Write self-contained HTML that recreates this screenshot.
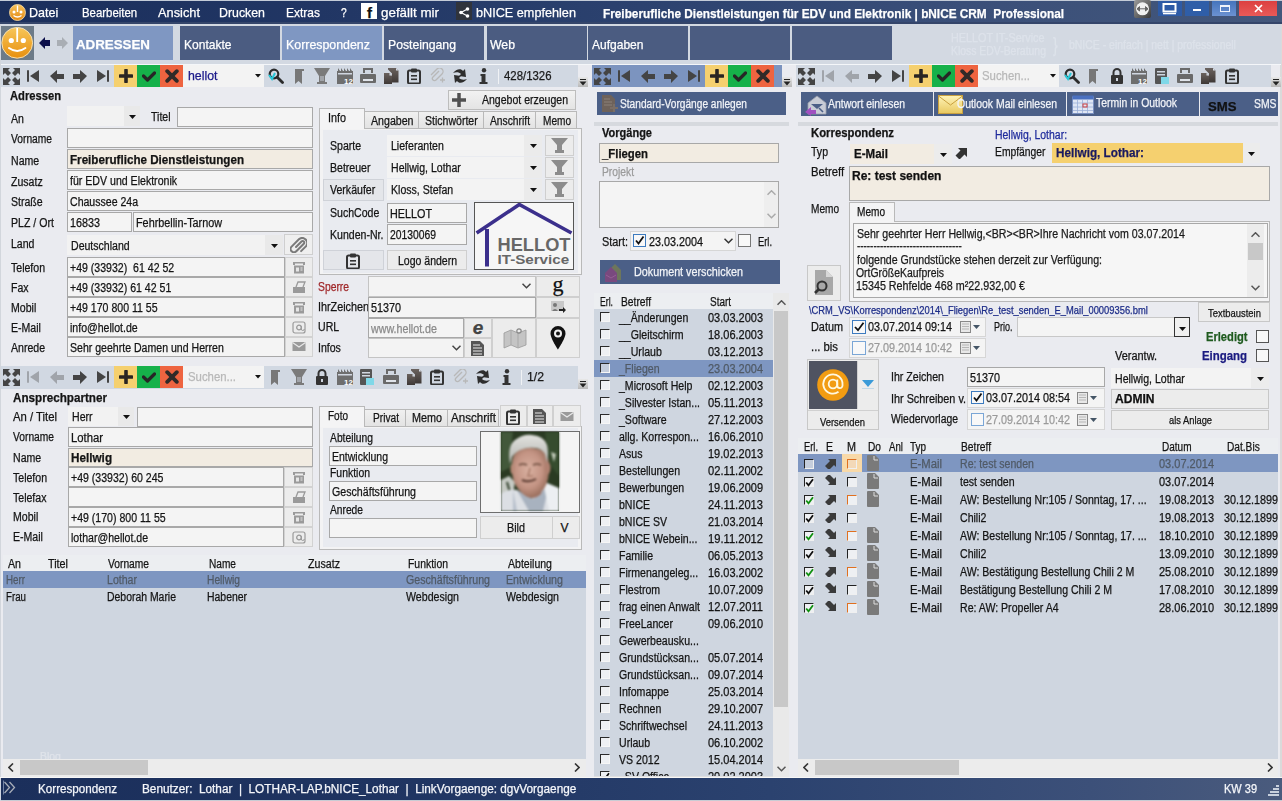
<!DOCTYPE html>
<html><head><meta charset="utf-8"><style>
html,body{margin:0;padding:0;}
body{width:1282px;height:801px;overflow:hidden;position:relative;background:#eaebf0;font-family:"Liberation Sans",sans-serif;}
body>div,body>svg{position:absolute;white-space:pre;transform-origin:0 0;-webkit-text-stroke:0.25px currentColor;}
</style></head><body>
<div style="left:0px;top:0px;width:1282px;height:801px;background:#eaebf0;"></div>
<div style="left:0px;top:24px;width:1px;height:760px;background:#d2d6dc;"></div>
<div style="left:1280px;top:24px;width:2px;height:760px;background:#dadada;"></div>
<div style="left:0px;top:0px;width:1282px;height:24px;background:linear-gradient(90deg,#1b2f5c 0%,#213664 25%,#2c426f 50%,#3a4f79 75%,#43577b 100%);"></div>
<div style="left:0px;top:0px;width:1282px;height:1px;background:#c4ccd8;"></div>
<svg style="left:9px;top:4px;" width="17" height="17" viewBox="0 0 17 17"><defs><linearGradient id="sg" x1="0" y1="0" x2="0" y2="1"><stop offset="0" stop-color="#f6c15a"/><stop offset="1" stop-color="#e48a14"/></linearGradient></defs><circle cx="8.5" cy="8.5" r="8" fill="url(#sg)" stroke="#fbe0a8" stroke-width=".8"/><path d="M8.5 1.5v6.5" stroke="#fff" stroke-width="1.4"/><circle cx="5" cy="8" r="1.5" fill="#fff"/><circle cx="12" cy="8" r="1.5" fill="#fff"/><path d="M4.5 11.5q4 3 8 0" stroke="#fff" stroke-width="1.3" fill="none"/></svg>
<div style="left:28.5px;top:3.0px;line-height:19px;font-size:13px;color:#ffffff;transform:scaleX(0.962);">Datei</div>
<div style="left:82.4px;top:3.0px;line-height:19px;font-size:13px;color:#ffffff;transform:scaleX(0.877);">Bearbeiten</div>
<div style="left:157.5px;top:3.0px;line-height:19px;font-size:13px;color:#ffffff;transform:scaleX(0.985);">Ansicht</div>
<div style="left:218.7px;top:3.0px;line-height:19px;font-size:13px;color:#ffffff;transform:scaleX(0.950);">Drucken</div>
<div style="left:285.7px;top:3.0px;line-height:19px;font-size:13px;color:#ffffff;transform:scaleX(0.923);">Extras</div>
<div style="left:341.0px;top:4.0px;line-height:18px;font-size:12px;color:#ffffff;transform:scaleX(0.850);">?</div>
<div style="left:361px;top:3px;width:16px;height:16px;background:#fff;"></div>
<div style="left:367.0px;top:2.0px;line-height:21px;font-size:15px;color:#111;font-weight:bold;transform:scaleX(1.000);">f</div>
<div style="left:381.0px;top:3.0px;line-height:19px;font-size:13px;color:#ffffff;transform:scaleX(1.029);">gefällt mir</div>
<div style="left:456px;top:2px;width:16px;height:18px;background:#30343c;"></div>
<svg style="left:459px;top:7px;" width="11" height="11" viewBox="0 0 11 11"><circle cx="8.5" cy="2" r="1.8" fill="#fff"/><circle cx="2" cy="5.5" r="1.8" fill="#fff"/><circle cx="8.5" cy="9" r="1.8" fill="#fff"/><path d="M8.5 2L2 5.5 8.5 9" stroke="#fff" stroke-width="1.2" fill="none"/></svg>
<div style="left:476.0px;top:3.0px;line-height:19px;font-size:13px;color:#ffffff;transform:scaleX(0.974);">bNICE empfehlen</div>
<div style="left:602.5px;top:3.5px;line-height:19px;font-size:13px;color:#ffffff;font-weight:bold;transform:scaleX(0.908);">Freiberufliche Dienstleistungen für EDV und Elektronik | bNICE CRM  Professional</div>
<svg style="left:1134px;top:0px;" width="17" height="19" viewBox="0 0 17 19"><defs><linearGradient id="tvg" x1="0" y1="0" x2="1" y2="1"><stop offset="0" stop-color="#9a9a9a"/><stop offset="1" stop-color="#3a3a3a"/></linearGradient></defs><rect x="0" y="0" width="17" height="18" rx="2" fill="url(#tvg)"/><circle cx="8.5" cy="8.8" r="6.5" fill="#f0f0f0"/><path d="M3.5 8.8h10M3 8.8l2.5-2.2v4.4zM14 8.8l-2.5-2.2v4.4z" stroke="#666" stroke-width="1" fill="#666"/></svg>
<div style="left:1158px;top:1px;width:24px;height:15px;background:#2d5aa6;"></div>
<svg style="left:1162px;top:3px;" width="16" height="12" viewBox="0 0 16 12"><rect x="1.5" y="1" width="12" height="7.5" fill="none" stroke="#fff" stroke-width="2"/><rect x="1" y="10" width="13" height="1.3" fill="#fff"/></svg>
<div style="left:1185px;top:1px;width:24px;height:15px;background:#2f5ea8;"></div>
<div style="left:1193px;top:9px;width:8px;height:2px;background:#fff;"></div>
<div style="left:1212px;top:1px;width:24px;height:15px;background:linear-gradient(#4474bc,#6c92d2);"></div>
<div style="left:1220px;top:4.5px;width:9.5px;height:7.5px;box-sizing:border-box;border:1.5px solid #eef3fb;border-top-width:2px;"></div>
<div style="left:1239px;top:1px;width:38px;height:15px;background:linear-gradient(#dc4040,#e85a58);"></div>
<svg style="left:1254px;top:4px;" width="9" height="9" viewBox="0 0 9 9"><path d="M1 1l7 7M8 1l-7 7" stroke="#fff" stroke-width="1.7"/></svg>
<div style="left:0px;top:22px;width:1282px;height:2px;background:#34456a;"></div>
<div style="left:1px;top:24px;width:1280px;height:40px;background:#d3d9e2;"></div>
<div style="left:1px;top:26px;width:33px;height:34px;background:#6d7b88;"></div>
<svg style="left:1px;top:26px;" width="33" height="34" viewBox="0 0 33 34"><defs><linearGradient id="bg2" x1="0" y1="0" x2="0" y2="1"><stop offset="0" stop-color="#f7c659"/><stop offset="1" stop-color="#e8900f"/></linearGradient></defs><circle cx="16.2" cy="16.8" r="15.4" fill="url(#bg2)" stroke="#fde6b8" stroke-width=".9"/><path d="M16.2 2v14" stroke="#fff" stroke-width="1.8"/><circle cx="10.3" cy="14.5" r="2.6" fill="#fff"/><circle cx="22.3" cy="14.5" r="2.6" fill="#fff"/><path d="M8 22q8.2 6 16.4 0" stroke="#fff" stroke-width="2" fill="none" stroke-linecap="round"/></svg>
<svg style="left:39px;top:37px;" width="12" height="12" viewBox="0 0 12 12"><path d="M0 6l6-6v3h5v6h-5v3z" fill="#0c0f4a"/></svg>
<svg style="left:56px;top:37px;" width="12" height="12" viewBox="0 0 12 12"><path d="M12 6l-6-6v3h-5v6h5v3z" fill="#a9aeb4"/></svg>
<div style="left:73px;top:26px;width:100px;height:34px;background:#7f97c2;"></div>
<div style="left:76.0px;top:35.0px;line-height:19px;font-size:13px;color:#fff;font-weight:bold;transform:scaleX(1.024);">ADRESSEN</div>
<div style="left:180px;top:26px;width:100px;height:34px;background:#4b5c81;"></div>
<div style="left:183.5px;top:35.0px;line-height:19px;font-size:13px;color:#fff;transform:scaleX(0.925);">Kontakte</div>
<div style="left:282px;top:26px;width:100px;height:34px;background:#7f97c2;"></div>
<div style="left:285.5px;top:35.0px;line-height:19px;font-size:13px;color:#fff;transform:scaleX(0.952);">Korrespondenz</div>
<div style="left:384px;top:26px;width:100px;height:34px;background:#4b5c81;"></div>
<div style="left:387.5px;top:35.0px;line-height:19px;font-size:13px;color:#fff;transform:scaleX(0.940);">Posteingang</div>
<div style="left:486.5px;top:26px;width:100px;height:34px;background:#4b5c81;"></div>
<div style="left:490.0px;top:35.0px;line-height:19px;font-size:13px;color:#fff;transform:scaleX(0.943);">Web</div>
<div style="left:588px;top:26px;width:100px;height:34px;background:#4b5c81;"></div>
<div style="left:591.5px;top:35.0px;line-height:19px;font-size:13px;color:#fff;transform:scaleX(0.925);">Aufgaben</div>
<div style="left:690px;top:26px;width:100px;height:34px;background:#4b5c81;"></div>
<div style="left:792px;top:26px;width:100px;height:34px;background:#4b5c81;"></div>
<div style="left:951.0px;top:28.0px;line-height:19px;font-size:13px;color:#dde2ea;transform:scaleX(0.831);">HELLOT IT-Service</div>
<div style="left:951.0px;top:40.5px;line-height:19px;font-size:13px;color:#dde2ea;transform:scaleX(0.801);">Kloss EDV-Beratung</div>
<div style="left:1052.5px;top:31.5px;line-height:26px;font-size:20px;color:#dde2ea;transform:scaleX(0.700);">}</div>
<div style="left:1069.0px;top:35.2px;line-height:19px;font-size:13px;color:#dde2ea;transform:scaleX(0.804);">bNICE - einfach | nett | professionell</div>
<div style="left:1px;top:64px;width:1280px;height:1px;background:#f4f6f9;"></div>
<div style="left:1px;top:65px;width:577px;height:22px;background:#d1d8e2;"></div>
<svg style="left:3px;top:68px;" width="17" height="17" viewBox="0 0 17 17"><g fill="#444"><path d="M0 0h7l-2 2 3 3-3 3-3-3-2 2z"/><path d="M17 0v7l-2-2-3 3-3-3 3-3-2-2z"/><path d="M0 17v-7l2 2 3-3 3 3-3 3 2 2z"/><path d="M17 17h-7l2-2-3-3 3-3 3 3 2-2z"/></g></svg>
<svg style="left:27px;top:70px;" width="13" height="13" viewBox="0 0 13 13"><g fill="#444"><rect x="0" y="0" width="2" height="12" rx="1"/><path d="M12 0v12l-9-6z"/></g></svg>
<svg style="left:50px;top:70px;" width="14" height="13" viewBox="0 0 14 13"><path fill="#444" d="M0 6l7-6v4h7v5h-7v4z"/></svg>
<svg style="left:73px;top:70px;" width="14" height="13" viewBox="0 0 14 13"><path fill="#444" d="M14 6l-7-6v4h-7v5h7v4z"/></svg>
<svg style="left:97px;top:70px;" width="13" height="13" viewBox="0 0 13 13"><g fill="#444"><rect x="10" y="0" width="2" height="12" rx="1"/><path d="M0 0v12l9-6z"/></g></svg>
<div style="left:114px;top:65px;width:23px;height:22px;background:#f5d06f;"></div>
<div style="left:137px;top:65px;width:23px;height:22px;background:#16b14a;"></div>
<div style="left:160px;top:65px;width:23px;height:22px;background:#ee6440;"></div>
<svg style="left:119px;top:69px;" width="14" height="14" viewBox="0 0 14 14"><path d="M7 1.2v11.6M1.2 7h11.6" stroke="#2a2522" stroke-width="3.6" stroke-linecap="round"/></svg>
<svg style="left:142px;top:70px;" width="14" height="12" viewBox="0 0 14 12"><path d="M1.5 6l4 4 7-7" stroke="#262626" stroke-width="3.2" fill="none" stroke-linecap="round" stroke-linejoin="round"/></svg>
<svg style="left:165px;top:69px;" width="14" height="14" viewBox="0 0 14 14"><path d="M2.2 2.2l9.6 9.6M11.8 2.2l-9.6 9.6" stroke="#302a28" stroke-width="3.8" stroke-linecap="round"/></svg>
<div style="left:183px;top:65px;width:81px;height:22px;background:#f3f3f3;"></div>
<div style="left:187.5px;top:67.0px;line-height:18px;font-size:12px;color:#1c1a8a;transform:scaleX(1.028);">hellot</div>
<svg style="left:255px;top:74px;" width="6" height="4" viewBox="0 0 6 4"><path d="M0 0h6l-3 3.5z" fill="#111"/></svg>
<svg style="left:268px;top:68px;" width="16" height="16" viewBox="0 0 16 16"><circle cx="6" cy="6" r="4.3" stroke="#2b2b2b" stroke-width="2.2" fill="none"/><path d="M9 9l5.5 5.5" stroke="#2b2b2b" stroke-width="2.8" stroke-linecap="round"/><path d="M1 7l3 4 3-6" stroke="#28c8d8" stroke-width="2" fill="none"/></svg>
<svg style="left:295px;top:68px;" width="10" height="16" viewBox="0 0 10 16"><path fill="#777" d="M0 1h9v2h-2v13l-3.5-3-3.5 3z"/></svg>
<svg style="left:314px;top:68px;" width="16" height="16" viewBox="0 0 16 16"><path fill="#7a7a7a" d="M0 0h16l-5 8v6h2v2h-10v-2h2v-6z"/><path fill="#c8ced8" d="M6 8h4v5h-4z" opacity=".5"/></svg>
<svg style="left:337px;top:68px;" width="16" height="16" viewBox="0 0 16 16"><path fill="#6e6e6e" d="M0 3h16v13h-16z"/><path fill="#6e6e6e" d="M1 0l2 3h-2zM4 0l2 3h-2zM7 0l2 3h-2zM10 0l2 3h-2zM13 0l2 3h-2z"/><rect x="1" y="5" width="14" height="1.5" fill="#d0d6e0"/><text x="7" y="15.5" font-size="8" font-weight="bold" fill="#fff" font-family="Liberation Sans">12</text></svg>
<svg style="left:360px;top:68px;" width="16" height="16" viewBox="0 0 16 16"><path fill="#6a6a6a" d="M3 0h10v5h-2v-3h-6v3h-2z"/><rect x="0" y="6" width="16" height="9" rx="1" fill="#6a6a6a"/><rect x="3" y="11" width="10" height="2" fill="#e0e4ea"/></svg>
<svg style="left:384px;top:68px;" width="15" height="16" viewBox="0 0 15 16"><defs><linearGradient id="cpg" x1="0" y1="0" x2="0" y2="1"><stop offset="0" stop-color="#6a625e"/><stop offset="1" stop-color="#3e3836"/></linearGradient></defs><path fill="url(#cpg)" d="M4 0h8l2.5 2.5v12h-6.5v-9l-4-4z"/><path fill="#d8dde6" d="M12 0v2.5h2.5z"/><path fill="url(#cpg)" d="M0 5h5.5l2.5 2.5v8.5h-8z"/><path fill="#d8dde6" d="M5.5 5v2.5h2.5z"/></svg>
<svg style="left:407px;top:68px;" width="14" height="16" viewBox="0 0 14 16"><rect x="1" y="2.5" width="12" height="13" rx="1.5" fill="none" stroke="#333" stroke-width="2"/><rect x="4" y="0.5" width="6" height="4" rx="1" fill="#333"/><rect x="4" y="7" width="6" height="1.6" fill="#333"/><rect x="4" y="10.5" width="6" height="1.6" fill="#333"/></svg>
<svg style="left:430px;top:68px;" width="15" height="16" viewBox="0 0 15 16"><path d="M9 3l-6 6a2 2 0 0 0 3 3l6-6a3.5 3.5 0 0 0-5-5l-6 6" fill="none" stroke="#b8b8b8" stroke-width="1.3"/><path d="M10 12h5M12.5 9.5v5" stroke="#b8b8b8" stroke-width="1.3"/></svg>
<svg style="left:453px;top:68px;" width="14" height="16" viewBox="0 0 14 16"><path fill="#2e2e2e" d="M0 5C3 1 8 0 10 3L12 1 13 9 6 8 8 6C6 4 3 4 0 5Z"/><path fill="#2e2e2e" d="M14 11C11 15 6 16 4 13L2 15 1 7 8 8 6 10C8 12 11 12 14 11Z"/></svg>
<svg style="left:479px;top:68px;" width="10" height="16" viewBox="0 0 10 16"><circle cx="5" cy="2.2" r="2.2" fill="#333"/><path fill="#333" d="M1.5 6h5v8h2v2h-8v-2h2v-6h-1z"/></svg>
<div style="left:498px;top:69px;width:1px;height:15px;background:#f0f2f5;"></div>
<div style="left:503.5px;top:67.0px;line-height:18px;font-size:12px;color:#1a1a1a;transform:scaleX(0.949);">428/1326</div>
<div style="left:578px;top:77px;width:10px;height:10px;background:linear-gradient(#e8e8e8,#b8b8b8);"></div>
<svg style="left:579px;top:79px;" width="8" height="7" viewBox="0 0 8 7"><rect x="1" y="0" width="6" height="1" fill="#222"/><path d="M0.5 2.5h7l-3.5 4z" fill="#222"/></svg>
<div style="left:592px;top:65px;width:190px;height:22px;background:#7c94bf;"></div>
<svg style="left:594px;top:68px;" width="17" height="17" viewBox="0 0 17 17"><g fill="#444"><path d="M0 0h7l-2 2 3 3-3 3-3-3-2 2z"/><path d="M17 0v7l-2-2-3 3-3-3 3-3-2-2z"/><path d="M0 17v-7l2 2 3-3 3 3-3 3 2 2z"/><path d="M17 17h-7l2-2-3-3 3-3 3 3 2-2z"/></g></svg>
<svg style="left:618px;top:70px;" width="13" height="13" viewBox="0 0 13 13"><g fill="#444"><rect x="0" y="0" width="2" height="12" rx="1"/><path d="M12 0v12l-9-6z"/></g></svg>
<svg style="left:641px;top:70px;" width="14" height="13" viewBox="0 0 14 13"><path fill="#444" d="M0 6l7-6v4h7v5h-7v4z"/></svg>
<svg style="left:664px;top:70px;" width="14" height="13" viewBox="0 0 14 13"><path fill="#444" d="M14 6l-7-6v4h-7v5h7v4z"/></svg>
<svg style="left:688px;top:70px;" width="13" height="13" viewBox="0 0 13 13"><g fill="#444"><rect x="10" y="0" width="2" height="12" rx="1"/><path d="M0 0v12l9-6z"/></g></svg>
<div style="left:705px;top:65px;width:23px;height:22px;background:#f5d06f;"></div>
<div style="left:728px;top:65px;width:23px;height:22px;background:#16b14a;"></div>
<div style="left:751px;top:65px;width:23px;height:22px;background:#ee6440;"></div>
<svg style="left:710px;top:69px;" width="14" height="14" viewBox="0 0 14 14"><path d="M7 1.2v11.6M1.2 7h11.6" stroke="#2a2522" stroke-width="3.6" stroke-linecap="round"/></svg>
<svg style="left:733px;top:70px;" width="14" height="12" viewBox="0 0 14 12"><path d="M1.5 6l4 4 7-7" stroke="#262626" stroke-width="3.2" fill="none" stroke-linecap="round" stroke-linejoin="round"/></svg>
<svg style="left:756px;top:69px;" width="14" height="14" viewBox="0 0 14 14"><path d="M2.2 2.2l9.6 9.6M11.8 2.2l-9.6 9.6" stroke="#302a28" stroke-width="3.8" stroke-linecap="round"/></svg>
<div style="left:782px;top:77px;width:10px;height:10px;background:linear-gradient(#e8e8e8,#b8b8b8);"></div>
<svg style="left:783px;top:79px;" width="8" height="7" viewBox="0 0 8 7"><rect x="1" y="0" width="6" height="1" fill="#222"/><path d="M0.5 2.5h7l-3.5 4z" fill="#222"/></svg>
<div style="left:796px;top:65px;width:475px;height:22px;background:#d1d8e2;"></div>
<svg style="left:798px;top:68px;" width="17" height="17" viewBox="0 0 17 17"><g fill="#444"><path d="M0 0h7l-2 2 3 3-3 3-3-3-2 2z"/><path d="M17 0v7l-2-2-3 3-3-3 3-3-2-2z"/><path d="M0 17v-7l2 2 3-3 3 3-3 3 2 2z"/><path d="M17 17h-7l2-2-3-3 3-3 3 3 2-2z"/></g></svg>
<svg style="left:822px;top:70px;" width="13" height="13" viewBox="0 0 13 13"><g fill="#a0a4aa"><rect x="0" y="0" width="2" height="12" rx="1"/><path d="M12 0v12l-9-6z"/></g></svg>
<svg style="left:845px;top:70px;" width="14" height="13" viewBox="0 0 14 13"><path fill="#a0a4aa" d="M0 6l7-6v4h7v5h-7v4z"/></svg>
<svg style="left:868px;top:70px;" width="14" height="13" viewBox="0 0 14 13"><path fill="#444" d="M14 6l-7-6v4h-7v5h7v4z"/></svg>
<svg style="left:892px;top:70px;" width="13" height="13" viewBox="0 0 13 13"><g fill="#444"><rect x="10" y="0" width="2" height="12" rx="1"/><path d="M0 0v12l9-6z"/></g></svg>
<div style="left:909px;top:65px;width:23px;height:22px;background:#f5d06f;"></div>
<div style="left:932px;top:65px;width:23px;height:22px;background:#16b14a;"></div>
<div style="left:955px;top:65px;width:23px;height:22px;background:#ee6440;"></div>
<svg style="left:914px;top:69px;" width="14" height="14" viewBox="0 0 14 14"><path d="M7 1.2v11.6M1.2 7h11.6" stroke="#2a2522" stroke-width="3.6" stroke-linecap="round"/></svg>
<svg style="left:937px;top:70px;" width="14" height="12" viewBox="0 0 14 12"><path d="M1.5 6l4 4 7-7" stroke="#262626" stroke-width="3.2" fill="none" stroke-linecap="round" stroke-linejoin="round"/></svg>
<svg style="left:960px;top:69px;" width="14" height="14" viewBox="0 0 14 14"><path d="M2.2 2.2l9.6 9.6M11.8 2.2l-9.6 9.6" stroke="#302a28" stroke-width="3.8" stroke-linecap="round"/></svg>
<div style="left:978px;top:65px;width:81px;height:22px;background:#f3f3f3;"></div>
<div style="left:982.0px;top:67.0px;line-height:18px;font-size:12px;color:#b8b8b8;transform:scaleX(0.947);">Suchen...</div>
<svg style="left:1050px;top:74px;" width="6" height="4" viewBox="0 0 6 4"><path d="M0 0h6l-3 3.5z" fill="#111"/></svg>
<svg style="left:1064px;top:68px;" width="16" height="16" viewBox="0 0 16 16"><circle cx="6" cy="6" r="4.3" stroke="#2b2b2b" stroke-width="2.2" fill="none"/><path d="M9 9l5.5 5.5" stroke="#2b2b2b" stroke-width="2.8" stroke-linecap="round"/><path d="M1 7l3 4 3-6" stroke="#28c8d8" stroke-width="2" fill="none"/></svg>
<svg style="left:1089px;top:68px;" width="10" height="16" viewBox="0 0 10 16"><path fill="#777" d="M0 1h9v2h-2v13l-3.5-3-3.5 3z"/></svg>
<svg style="left:1110px;top:68px;" width="14" height="16" viewBox="0 0 14 16"><path d="M3.5 7v-2.5a3.5 3.5 0 0 1 7 0v2.5" fill="none" stroke="#333" stroke-width="2"/><rect x="1" y="7" width="12" height="9" rx="1" fill="#333"/><rect x="6" y="10" width="2" height="3" fill="#d0d6e0"/></svg>
<svg style="left:1131px;top:68px;" width="16" height="16" viewBox="0 0 16 16"><path fill="#6e6e6e" d="M0 3h16v13h-16z"/><path fill="#6e6e6e" d="M1 0l2 3h-2zM4 0l2 3h-2zM7 0l2 3h-2zM10 0l2 3h-2zM13 0l2 3h-2z"/><rect x="1" y="5" width="14" height="1.5" fill="#d0d6e0"/><text x="7" y="15.5" font-size="8" font-weight="bold" fill="#fff" font-family="Liberation Sans">12</text></svg>
<svg style="left:1155px;top:68px;" width="16" height="16" viewBox="0 0 16 16"><rect x="0" y="0" width="12" height="16" rx="1" fill="#555"/><rect x="2" y="3" width="8" height="1.5" fill="#d0d6e0"/><rect x="2" y="6" width="8" height="1.5" fill="#d0d6e0"/><path fill="#7fd8e8" d="M6 9h8v7h-8z"/></svg>
<svg style="left:1177px;top:68px;" width="16" height="16" viewBox="0 0 16 16"><path fill="#6a6a6a" d="M3 0h10v5h-2v-3h-6v3h-2z"/><rect x="0" y="6" width="16" height="9" rx="1" fill="#6a6a6a"/><rect x="3" y="11" width="10" height="2" fill="#e0e4ea"/></svg>
<svg style="left:1201px;top:68px;" width="15" height="16" viewBox="0 0 15 16"><defs><linearGradient id="cpg" x1="0" y1="0" x2="0" y2="1"><stop offset="0" stop-color="#6a625e"/><stop offset="1" stop-color="#3e3836"/></linearGradient></defs><path fill="url(#cpg)" d="M4 0h8l2.5 2.5v12h-6.5v-9l-4-4z"/><path fill="#d8dde6" d="M12 0v2.5h2.5z"/><path fill="url(#cpg)" d="M0 5h5.5l2.5 2.5v8.5h-8z"/><path fill="#d8dde6" d="M5.5 5v2.5h2.5z"/></svg>
<svg style="left:1225px;top:68px;" width="14" height="16" viewBox="0 0 14 16"><rect x="1" y="2.5" width="12" height="13" rx="1.5" fill="none" stroke="#333" stroke-width="2"/><rect x="4" y="0.5" width="6" height="4" rx="1" fill="#333"/><rect x="4" y="7" width="6" height="1.6" fill="#333"/><rect x="4" y="10.5" width="6" height="1.6" fill="#333"/></svg>
<div style="left:1271px;top:77px;width:10px;height:10px;background:linear-gradient(#e8e8e8,#b8b8b8);"></div>
<svg style="left:1272px;top:79px;" width="8" height="7" viewBox="0 0 8 7"><rect x="1" y="0" width="6" height="1" fill="#222"/><path d="M0.5 2.5h7l-3.5 4z" fill="#222"/></svg>
<div style="left:9.5px;top:87.0px;line-height:18px;font-size:12px;color:#141414;font-weight:bold;transform:scaleX(0.933);">Adressen</div>
<div style="left:11.0px;top:109.5px;line-height:18px;font-size:12px;color:#141414;transform:scaleX(0.880);">An</div>
<div style="left:67px;top:106px;width:73px;height:20px;background:#f2f2f2;"></div>
<div style="left:124px;top:106px;width:16px;height:20px;background:#e9e9e9;"></div>
<svg style="left:128.5px;top:114.5px;" width="7" height="4" viewBox="0 0 7 4"><path d="M0 0h7l-3.5 4z" fill="#111"/></svg>
<div style="left:150.5px;top:108.0px;line-height:18px;font-size:12px;color:#141414;transform:scaleX(0.880);">Titel</div>
<div style="left:177px;top:107px;width:136px;height:20px;background:#f4f4f4;box-sizing:border-box;border:1px solid #a8a8a8;"></div>
<div style="left:11.0px;top:130.0px;line-height:18px;font-size:12px;color:#141414;transform:scaleX(0.854);">Vorname</div>
<div style="left:67px;top:128px;width:246px;height:20px;background:#f4f4f4;box-sizing:border-box;border:1px solid #a8a8a8;"></div>
<div style="left:11.0px;top:151.5px;line-height:18px;font-size:12px;color:#141414;transform:scaleX(0.880);">Name</div>
<div style="left:67px;top:149px;width:246px;height:20px;background:#f2ece2;box-sizing:border-box;border:1px solid #a8a8a8;"></div>
<div style="left:70.0px;top:150.5px;line-height:18px;font-size:12px;color:#141414;font-weight:bold;transform:scaleX(0.970);">Freiberufliche Dienstleistungen</div>
<div style="left:11.0px;top:172.5px;line-height:18px;font-size:12px;color:#141414;transform:scaleX(0.880);">Zusatz</div>
<div style="left:67px;top:170px;width:246px;height:20px;background:#f4f4f4;box-sizing:border-box;border:1px solid #a8a8a8;"></div>
<div style="left:70.0px;top:171.5px;line-height:18px;font-size:12px;color:#141414;transform:scaleX(0.882);">für EDV und Elektronik</div>
<div style="left:11.0px;top:193.0px;line-height:18px;font-size:12px;color:#141414;transform:scaleX(0.880);">Straße</div>
<div style="left:67px;top:191px;width:246px;height:20px;background:#f4f4f4;box-sizing:border-box;border:1px solid #a8a8a8;"></div>
<div style="left:70.0px;top:192.5px;line-height:18px;font-size:12px;color:#141414;transform:scaleX(0.880);">Chaussee 24a</div>
<div style="left:11.0px;top:213.5px;line-height:18px;font-size:12px;color:#141414;transform:scaleX(0.880);">PLZ / Ort</div>
<div style="left:67px;top:212px;width:65px;height:20px;background:#f4f4f4;box-sizing:border-box;border:1px solid #a8a8a8;"></div>
<div style="left:70.0px;top:213.5px;line-height:18px;font-size:12px;color:#141414;transform:scaleX(0.899);">16833</div>
<div style="left:133px;top:212px;width:180px;height:20px;background:#f4f4f4;box-sizing:border-box;border:1px solid #a8a8a8;"></div>
<div style="left:136.0px;top:213.5px;line-height:18px;font-size:12px;color:#141414;transform:scaleX(0.902);">Fehrbellin-Tarnow</div>
<div style="left:11.0px;top:235.0px;line-height:18px;font-size:12px;color:#141414;transform:scaleX(0.880);">Land</div>
<div style="left:67px;top:235px;width:216px;height:20px;background:#f2f2f2;"></div>
<div style="left:265px;top:235px;width:18px;height:20px;background:#e9e9e9;"></div>
<svg style="left:270.5px;top:243.5px;" width="7" height="4" viewBox="0 0 7 4"><path d="M0 0h7l-3.5 4z" fill="#111"/></svg>
<div style="left:70.5px;top:236.5px;line-height:18px;font-size:12px;color:#141414;transform:scaleX(0.880);">Deutschland</div>
<div style="left:284px;top:234px;width:29px;height:21px;background:#efefef;box-sizing:border-box;border:1px solid #cfcfcf;"></div>
<svg style="left:290px;top:237px;" width="17" height="16" viewBox="0 0 17 16"><path d="M6 10l5.5-5.5a1.6 1.6 0 0 1 2.3 2.3l-7.5 7.5a3.3 3.3 0 0 1-4.7-4.7l7.5-7.5a5 5 0 0 1 7 7l-5 5" stroke="#7a7a7a" stroke-width="2" fill="none" stroke-linecap="round"/></svg>
<div style="left:11.0px;top:258.5px;line-height:18px;font-size:12px;color:#141414;transform:scaleX(0.880);">Telefon</div>
<div style="left:67px;top:257px;width:218px;height:20px;background:#f4f4f4;box-sizing:border-box;border:1px solid #a8a8a8;"></div>
<div style="left:70.0px;top:258.5px;line-height:18px;font-size:12px;color:#141414;transform:scaleX(0.880);">+49 (33932)  61 42 52</div>
<div style="left:285px;top:257px;width:28px;height:20px;background:#ececec;box-sizing:border-box;border:1px solid #d2d2d2;"></div>
<svg style="left:292px;top:261px;" width="14" height="13" viewBox="0 0 14 13"><path d="M1 1h12v3h-2v-1.5h-8v1.5h-2z" fill="#9a9a9a"/><rect x="2" y="4.5" width="10" height="8" fill="#9a9a9a"/><rect x="4" y="6.5" width="3" height="4" fill="#e6e6e6"/><path d="M8.5 7h2M8.5 9h2" stroke="#e6e6e6" stroke-width="1"/></svg>
<div style="left:11.0px;top:279.0px;line-height:18px;font-size:12px;color:#141414;transform:scaleX(0.880);">Fax</div>
<div style="left:67px;top:277px;width:218px;height:20px;background:#f4f4f4;box-sizing:border-box;border:1px solid #a8a8a8;"></div>
<div style="left:70.0px;top:278.5px;line-height:18px;font-size:12px;color:#141414;transform:scaleX(0.880);">+49 (33932) 61 42 51</div>
<div style="left:285px;top:277px;width:28px;height:20px;background:#ececec;box-sizing:border-box;border:1px solid #d2d2d2;"></div>
<svg style="left:292px;top:281px;" width="14" height="12" viewBox="0 0 14 12"><path d="M1 6h12v6h-12z" fill="#9a9a9a"/><path d="M4 6l2-5h7l-2 5" fill="none" stroke="#9a9a9a" stroke-width="1.3"/></svg>
<div style="left:11.0px;top:298.6px;line-height:18px;font-size:12px;color:#141414;transform:scaleX(0.880);">Mobil</div>
<div style="left:67px;top:297px;width:218px;height:20px;background:#f4f4f4;box-sizing:border-box;border:1px solid #a8a8a8;"></div>
<div style="left:70.0px;top:298.5px;line-height:18px;font-size:12px;color:#141414;transform:scaleX(0.880);">+49 170 800 11 55</div>
<div style="left:285px;top:297px;width:28px;height:20px;background:#ececec;box-sizing:border-box;border:1px solid #d2d2d2;"></div>
<svg style="left:292px;top:301px;" width="14" height="13" viewBox="0 0 14 13"><path d="M1 1h12v3h-2v-1.5h-8v1.5h-2z" fill="#9a9a9a"/><rect x="2" y="4.5" width="10" height="8" fill="#9a9a9a"/><rect x="4" y="6.5" width="3" height="4" fill="#e6e6e6"/><path d="M8.5 7h2M8.5 9h2" stroke="#e6e6e6" stroke-width="1"/></svg>
<div style="left:11.0px;top:318.7px;line-height:18px;font-size:12px;color:#141414;transform:scaleX(0.880);">E-Mail</div>
<div style="left:67px;top:317px;width:218px;height:20px;background:#f4f4f4;box-sizing:border-box;border:1px solid #a8a8a8;"></div>
<div style="left:70.0px;top:318.5px;line-height:18px;font-size:12px;color:#141414;transform:scaleX(0.880);">info@hellot.de</div>
<div style="left:285px;top:317px;width:28px;height:20px;background:#ececec;box-sizing:border-box;border:1px solid #d2d2d2;"></div>
<svg style="left:292px;top:321px;" width="14" height="13" viewBox="0 0 14 13"><rect x="1" y="1" width="12" height="11" rx="2" fill="none" stroke="#9a9a9a" stroke-width="1.2"/><circle cx="7" cy="6.5" r="2.3" fill="none" stroke="#9a9a9a" stroke-width="1.3"/><path d="M9.3 5v3a1.5 1.5 0 0 0 3 0" fill="none" stroke="#9a9a9a" stroke-width="1"/></svg>
<div style="left:11.0px;top:338.7px;line-height:18px;font-size:12px;color:#141414;transform:scaleX(0.880);">Anrede</div>
<div style="left:67px;top:337px;width:218px;height:20px;background:#f4f4f4;box-sizing:border-box;border:1px solid #a8a8a8;"></div>
<div style="left:70.0px;top:338.5px;line-height:18px;font-size:12px;color:#141414;transform:scaleX(0.880);">Sehr geehrte Damen und Herren</div>
<div style="left:285px;top:337px;width:28px;height:20px;background:#ececec;box-sizing:border-box;border:1px solid #d2d2d2;"></div>
<svg style="left:292px;top:341px;" width="14" height="11" viewBox="0 0 14 11"><rect x="0.5" y="1" width="13" height="9" fill="#9a9a9a"/><path d="M0.5 1.5l6.5 4.5 6.5-4.5" stroke="#e8e8e8" stroke-width="1.2" fill="none"/></svg>
<div style="left:448px;top:90px;width:128px;height:20px;background:linear-gradient(#f2f2f2,#e4e4e4);box-sizing:border-box;border:1px solid #bdbdbd;"></div>
<svg style="left:451px;top:92px;" width="16" height="16" viewBox="0 0 16 16"><path d="M8 1v14M1 8h14" stroke="#505050" stroke-width="3.5"/></svg>
<div style="left:482.0px;top:91.0px;line-height:18px;font-size:12px;color:#141414;transform:scaleX(0.877);">Angebot erzeugen</div>
<div style="left:319px;top:128px;width:263px;height:147px;background:#f3f3f4;box-sizing:border-box;border:1px solid #b9b9b9;"></div>
<div style="left:364px;top:111px;width:55px;height:18px;background:linear-gradient(#f0f0f0,#e3e3e3);box-sizing:border-box;border:1px solid #b9b9b9;"></div>
<div style="left:370.8px;top:111.5px;line-height:18px;font-size:12px;color:#141414;transform:scaleX(0.885);">Angaben</div>
<div style="left:418px;top:111px;width:66px;height:18px;background:linear-gradient(#f0f0f0,#e3e3e3);box-sizing:border-box;border:1px solid #b9b9b9;"></div>
<div style="left:425.1px;top:111.5px;line-height:18px;font-size:12px;color:#141414;transform:scaleX(0.878);">Stichwörter</div>
<div style="left:483px;top:111px;width:53px;height:18px;background:linear-gradient(#f0f0f0,#e3e3e3);box-sizing:border-box;border:1px solid #b9b9b9;"></div>
<div style="left:490.0px;top:111.5px;line-height:18px;font-size:12px;color:#141414;transform:scaleX(0.857);">Anschrift</div>
<div style="left:535px;top:111px;width:42px;height:18px;background:linear-gradient(#f0f0f0,#e3e3e3);box-sizing:border-box;border:1px solid #b9b9b9;"></div>
<div style="left:542.5px;top:111.5px;line-height:18px;font-size:12px;color:#141414;transform:scaleX(0.840);">Memo</div>
<div style="left:319px;top:108px;width:46px;height:21px;background:#f4f4f5;box-sizing:border-box;border:1px solid #b9b9b9;border-bottom:none;"></div>
<div style="left:327.5px;top:109.0px;line-height:18px;font-size:12px;color:#141414;transform:scaleX(0.900);">Info</div>
<div style="left:323px;top:130px;width:255px;height:143px;background:#e9ebf0;"></div>
<div style="left:329.5px;top:136.5px;line-height:18px;font-size:12px;color:#141414;transform:scaleX(0.880);">Sparte</div>
<div style="left:387px;top:135px;width:155px;height:21px;background:#f3f3f3;"></div>
<div style="left:524px;top:135px;width:18px;height:21px;background:#ebebeb;"></div>
<svg style="left:529.5px;top:144.0px;" width="7" height="4" viewBox="0 0 7 4"><path d="M0 0h7l-3.5 4z" fill="#111"/></svg>
<div style="left:390.5px;top:137.0px;line-height:18px;font-size:12px;color:#141414;transform:scaleX(0.880);">Lieferanten</div>
<div style="left:545px;top:135px;width:29px;height:21px;background:#ececec;box-sizing:border-box;border:1px solid #cfcfcf;"></div>
<svg style="left:551px;top:138px;" width="17" height="15" viewBox="0 0 17 15"><path d="M0 0h17l-6 7v5h2v3h-9v-3h2v-5z" fill="#8c8c8c"/></svg>
<div style="left:329.5px;top:158.5px;line-height:18px;font-size:12px;color:#141414;transform:scaleX(0.880);">Betreuer</div>
<div style="left:387px;top:157px;width:155px;height:21px;background:#f3f3f3;"></div>
<div style="left:524px;top:157px;width:18px;height:21px;background:#ebebeb;"></div>
<svg style="left:529.5px;top:166.0px;" width="7" height="4" viewBox="0 0 7 4"><path d="M0 0h7l-3.5 4z" fill="#111"/></svg>
<div style="left:390.5px;top:159.0px;line-height:18px;font-size:12px;color:#141414;transform:scaleX(0.880);">Hellwig, Lothar</div>
<div style="left:545px;top:157px;width:29px;height:21px;background:#ececec;box-sizing:border-box;border:1px solid #cfcfcf;"></div>
<svg style="left:551px;top:160px;" width="17" height="15" viewBox="0 0 17 15"><path d="M0 0h17l-6 7v5h2v3h-9v-3h2v-5z" fill="#8c8c8c"/></svg>
<div style="left:323px;top:179px;width:61px;height:22px;background:#e4e6ea;box-sizing:border-box;border:1px solid #cfd2d8;"></div>
<div style="left:329.5px;top:180.5px;line-height:18px;font-size:12px;color:#141414;transform:scaleX(0.880);">Verkäufer</div>
<div style="left:387px;top:179px;width:155px;height:21px;background:#f3f3f3;"></div>
<div style="left:524px;top:179px;width:18px;height:21px;background:#ebebeb;"></div>
<svg style="left:529.5px;top:188.0px;" width="7" height="4" viewBox="0 0 7 4"><path d="M0 0h7l-3.5 4z" fill="#111"/></svg>
<div style="left:390.5px;top:181.0px;line-height:18px;font-size:12px;color:#141414;transform:scaleX(0.880);">Kloss, Stefan</div>
<div style="left:545px;top:179px;width:29px;height:21px;background:#ececec;box-sizing:border-box;border:1px solid #cfcfcf;"></div>
<svg style="left:551px;top:182px;" width="17" height="15" viewBox="0 0 17 15"><path d="M0 0h17l-6 7v5h2v3h-9v-3h2v-5z" fill="#8c8c8c"/></svg>
<div style="left:329.5px;top:203.5px;line-height:18px;font-size:12px;color:#141414;transform:scaleX(0.880);">SuchCode</div>
<div style="left:387px;top:203px;width:80px;height:20px;background:#f4f4f4;box-sizing:border-box;border:1px solid #a8a8a8;"></div>
<div style="left:390.0px;top:204.5px;line-height:18px;font-size:12px;color:#141414;transform:scaleX(0.900);">HELLOT</div>
<div style="left:329.5px;top:225.5px;line-height:18px;font-size:12px;color:#141414;transform:scaleX(0.880);">Kunden-Nr.</div>
<div style="left:387px;top:224px;width:80px;height:21px;background:#f4f4f4;box-sizing:border-box;border:1px solid #a8a8a8;"></div>
<div style="left:390.0px;top:226.0px;line-height:18px;font-size:12px;color:#141414;transform:scaleX(0.862);">20130069</div>
<div style="left:323px;top:250px;width:61px;height:20px;background:#e4e6ea;box-sizing:border-box;border:1px solid #cfd2d8;"></div>
<svg style="left:346px;top:253px;" width="14" height="16" viewBox="0 0 14 16"><rect x="1" y="2.5" width="12" height="13" rx="1.5" fill="none" stroke="#333" stroke-width="2"/><rect x="4" y="0.5" width="6" height="4" rx="1" fill="#333"/><rect x="4" y="7" width="6" height="1.6" fill="#333"/><rect x="4" y="10.5" width="6" height="1.6" fill="#333"/></svg>
<div style="left:387px;top:250px;width:80px;height:20px;background:#ececec;box-sizing:border-box;border:1px solid #cfcfcf;"></div>
<div style="left:397.5px;top:251.5px;line-height:18px;font-size:12px;color:#141414;transform:scaleX(0.876);">Logo ändern</div>
<div style="left:474px;top:202px;width:100px;height:68px;background:#f6f6f6;box-sizing:border-box;border:1px solid #555;"></div>
<svg style="left:475px;top:203px;" width="98" height="66" viewBox="0 0 98 66"><path d="M1.6 30L44.3 1.5 96.5 30" stroke="#3b2f8c" stroke-width="3.6" fill="none" stroke-linejoin="round"/><path d="M12 26v37.5" stroke="#3b2f8c" stroke-width="4"/><text x="22.5" y="48.1" textLength="73" lengthAdjust="spacingAndGlyphs" font-family="Liberation Sans" font-weight="bold" font-size="18.5" fill="#676767">HELLOT</text><text x="22.5" y="61.4" textLength="71.6" lengthAdjust="spacingAndGlyphs" font-family="Liberation Sans" font-weight="bold" font-size="13.2" fill="#676767">IT-Service</text></svg>
<div style="left:318.0px;top:278.0px;line-height:18px;font-size:12px;color:#a0282a;transform:scaleX(0.861);">Sperre</div>
<div style="left:368px;top:276px;width:168px;height:21px;background:#f3f3f3;box-sizing:border-box;border:1px solid #c4c4c4;"></div>
<svg style="left:522px;top:283px;" width="9" height="6" viewBox="0 0 9 6"><path d="M0 0l4 4 4-4" transform="translate(.5 .8)" stroke="#444" stroke-width="1.5" fill="none"/></svg>
<div style="left:536px;top:276px;width:44px;height:21px;background:#ececec;box-sizing:border-box;border:1px solid #cfcfcf;"></div>
<div style="left:552.4px;top:269.5px;line-height:28px;font-size:22px;color:#111;transform:scaleX(1.000);font-family:'Liberation Serif';">g</div>
<div style="left:318.0px;top:298.0px;line-height:18px;font-size:12px;color:#141414;transform:scaleX(0.900);">IhrZeichen</div>
<div style="left:368px;top:297px;width:168px;height:21px;background:#f4f4f4;box-sizing:border-box;border:1px solid #a8a8a8;"></div>
<div style="left:371.0px;top:299.0px;line-height:18px;font-size:12px;color:#141414;transform:scaleX(0.899);">51370</div>
<div style="left:536px;top:297px;width:44px;height:21px;background:#ececec;box-sizing:border-box;border:1px solid #cfcfcf;"></div>
<svg style="left:551px;top:301px;" width="15" height="13" viewBox="0 0 15 13"><rect x="0" y="0" width="13" height="10" fill="#c8c8c8"/><circle cx="4" cy="4" r="2" fill="#777"/><path d="M1 10q3-4 6 0" fill="#777"/><path d="M8 8h4v-2l3 3-3 3v-2h-4z" fill="#222"/></svg>
<div style="left:318.0px;top:318.0px;line-height:18px;font-size:12px;color:#141414;transform:scaleX(0.880);">URL</div>
<div style="left:368px;top:318px;width:96px;height:20px;background:#f4f4f4;box-sizing:border-box;border:1px solid #a8a8a8;"></div>
<div style="left:371.0px;top:319.5px;line-height:18px;font-size:12px;color:#8a8a8a;transform:scaleX(0.891);">www.hellot.de</div>
<div style="left:464px;top:318px;width:28px;height:20px;background:#ececec;box-sizing:border-box;border:1px solid #cfcfcf;"></div>
<div style="left:472.7px;top:314.5px;line-height:25px;font-size:19px;color:#444;font-weight:bold;transform:scaleX(1.000);font-style:italic;">e</div>
<div style="left:492px;top:318px;width:44px;height:40px;background:#ececec;box-sizing:border-box;border:1px solid #cfcfcf;"></div>
<svg style="left:503px;top:327px;" width="24" height="22" viewBox="0 0 24 22"><path d="M1 6l7-3 7 3 8-3v15l-8 3-7-3-7 3z" fill="#c4c4c4" stroke="#9a9a9a" stroke-width=".8"/><path d="M8 3v15M15 6v15" stroke="#a8a8a8"/><circle cx="16" cy="4" r="2.2" fill="none" stroke="#888" stroke-width="1.2"/></svg>
<div style="left:536px;top:318px;width:44px;height:40px;background:#ececec;box-sizing:border-box;border:1px solid #cfcfcf;"></div>
<svg style="left:550px;top:326px;" width="16" height="24" viewBox="0 0 16 24"><path d="M8 0a7.5 7.5 0 0 1 7.5 7.5c0 5-7.5 16-7.5 16s-7.5-11-7.5-16a7.5 7.5 0 0 1 7.5-7.5z" fill="#111"/><circle cx="8" cy="7.5" r="4" fill="#eee"/><circle cx="8" cy="7.5" r="2" fill="#111"/></svg>
<div style="left:318.0px;top:338.5px;line-height:18px;font-size:12px;color:#141414;transform:scaleX(0.880);">Infos</div>
<div style="left:368px;top:338px;width:96px;height:20px;background:#f3f3f3;box-sizing:border-box;border:1px solid #c4c4c4;"></div>
<svg style="left:452px;top:345px;" width="9" height="6" viewBox="0 0 9 6"><path d="M0 0l4 4 4-4" transform="translate(.5 .8)" stroke="#444" stroke-width="1.5" fill="none"/></svg>
<div style="left:464px;top:338px;width:28px;height:20px;background:#ececec;box-sizing:border-box;border:1px solid #cfcfcf;"></div>
<svg style="left:471px;top:341px;" width="13" height="15" viewBox="0 0 13 15"><path d="M0 0h9l4 4v11h-13z" fill="#555"/><path d="M2 4h7M2 7h9M2 10h9M2 13h9" stroke="#ececec" stroke-width="1"/></svg>
<div style="left:1px;top:366px;width:577px;height:23px;background:#d1d8e2;"></div>
<svg style="left:3px;top:369px;" width="17" height="17" viewBox="0 0 17 17"><g fill="#444"><path d="M0 0h7l-2 2 3 3-3 3-3-3-2 2z"/><path d="M17 0v7l-2-2-3 3-3-3 3-3-2-2z"/><path d="M0 17v-7l2 2 3-3 3 3-3 3 2 2z"/><path d="M17 17h-7l2-2-3-3 3-3 3 3 2-2z"/></g></svg>
<svg style="left:27px;top:371px;" width="13" height="13" viewBox="0 0 13 13"><g fill="#a0a4aa"><rect x="0" y="0" width="2" height="12" rx="1"/><path d="M12 0v12l-9-6z"/></g></svg>
<svg style="left:50px;top:371px;" width="14" height="13" viewBox="0 0 14 13"><path fill="#a0a4aa" d="M0 6l7-6v4h7v5h-7v4z"/></svg>
<svg style="left:73px;top:371px;" width="14" height="13" viewBox="0 0 14 13"><path fill="#444" d="M14 6l-7-6v4h-7v5h7v4z"/></svg>
<svg style="left:97px;top:371px;" width="13" height="13" viewBox="0 0 13 13"><g fill="#444"><rect x="10" y="0" width="2" height="12" rx="1"/><path d="M0 0v12l9-6z"/></g></svg>
<div style="left:114px;top:366px;width:23px;height:22px;background:#f5d06f;"></div>
<div style="left:137px;top:366px;width:23px;height:22px;background:#16b14a;"></div>
<div style="left:160px;top:366px;width:23px;height:22px;background:#ee6440;"></div>
<svg style="left:119px;top:370px;" width="14" height="14" viewBox="0 0 14 14"><path d="M7 1.2v11.6M1.2 7h11.6" stroke="#2a2522" stroke-width="3.6" stroke-linecap="round"/></svg>
<svg style="left:142px;top:371px;" width="14" height="12" viewBox="0 0 14 12"><path d="M1.5 6l4 4 7-7" stroke="#262626" stroke-width="3.2" fill="none" stroke-linecap="round" stroke-linejoin="round"/></svg>
<svg style="left:165px;top:370px;" width="14" height="14" viewBox="0 0 14 14"><path d="M2.2 2.2l9.6 9.6M11.8 2.2l-9.6 9.6" stroke="#302a28" stroke-width="3.8" stroke-linecap="round"/></svg>
<div style="left:183px;top:366px;width:81px;height:22px;background:#f3f3f3;"></div>
<div style="left:187.5px;top:368.0px;line-height:18px;font-size:12px;color:#b8b8b8;transform:scaleX(0.947);">Suchen...</div>
<svg style="left:255px;top:375px;" width="6" height="4" viewBox="0 0 6 4"><path d="M0 0h6l-3 3.5z" fill="#111"/></svg>
<svg style="left:271px;top:369px;" width="10" height="16" viewBox="0 0 10 16"><path fill="#777" d="M0 1h9v2h-2v13l-3.5-3-3.5 3z"/></svg>
<svg style="left:291px;top:369px;" width="16" height="16" viewBox="0 0 16 16"><path fill="#7a7a7a" d="M0 0h16l-5 8v6h2v2h-10v-2h2v-6z"/><path fill="#c8ced8" d="M6 8h4v5h-4z" opacity=".5"/></svg>
<svg style="left:315px;top:369px;" width="14" height="16" viewBox="0 0 14 16"><path d="M3.5 7v-2.5a3.5 3.5 0 0 1 7 0v2.5" fill="none" stroke="#333" stroke-width="2"/><rect x="1" y="7" width="12" height="9" rx="1" fill="#333"/><rect x="6" y="10" width="2" height="3" fill="#d0d6e0"/></svg>
<svg style="left:337px;top:369px;" width="16" height="16" viewBox="0 0 16 16"><path fill="#6e6e6e" d="M0 3h16v13h-16z"/><path fill="#6e6e6e" d="M1 0l2 3h-2zM4 0l2 3h-2zM7 0l2 3h-2zM10 0l2 3h-2zM13 0l2 3h-2z"/><rect x="1" y="5" width="14" height="1.5" fill="#d0d6e0"/><text x="7" y="15.5" font-size="8" font-weight="bold" fill="#fff" font-family="Liberation Sans">12</text></svg>
<svg style="left:360px;top:369px;" width="16" height="16" viewBox="0 0 16 16"><rect x="0" y="0" width="12" height="16" rx="1" fill="#555"/><rect x="2" y="3" width="8" height="1.5" fill="#d0d6e0"/><rect x="2" y="6" width="8" height="1.5" fill="#d0d6e0"/><path fill="#7fd8e8" d="M6 9h8v7h-8z"/></svg>
<svg style="left:383px;top:369px;" width="16" height="16" viewBox="0 0 16 16"><path fill="#6a6a6a" d="M3 0h10v5h-2v-3h-6v3h-2z"/><rect x="0" y="6" width="16" height="9" rx="1" fill="#6a6a6a"/><rect x="3" y="11" width="10" height="2" fill="#e0e4ea"/></svg>
<svg style="left:407px;top:369px;" width="15" height="16" viewBox="0 0 15 16"><defs><linearGradient id="cpg" x1="0" y1="0" x2="0" y2="1"><stop offset="0" stop-color="#6a625e"/><stop offset="1" stop-color="#3e3836"/></linearGradient></defs><path fill="url(#cpg)" d="M4 0h8l2.5 2.5v12h-6.5v-9l-4-4z"/><path fill="#d8dde6" d="M12 0v2.5h2.5z"/><path fill="url(#cpg)" d="M0 5h5.5l2.5 2.5v8.5h-8z"/><path fill="#d8dde6" d="M5.5 5v2.5h2.5z"/></svg>
<svg style="left:430px;top:369px;" width="14" height="16" viewBox="0 0 14 16"><rect x="1" y="2.5" width="12" height="13" rx="1.5" fill="none" stroke="#333" stroke-width="2"/><rect x="4" y="0.5" width="6" height="4" rx="1" fill="#333"/><rect x="4" y="7" width="6" height="1.6" fill="#333"/><rect x="4" y="10.5" width="6" height="1.6" fill="#333"/></svg>
<svg style="left:453px;top:369px;" width="15" height="16" viewBox="0 0 15 16"><path d="M9 3l-6 6a2 2 0 0 0 3 3l6-6a3.5 3.5 0 0 0-5-5l-6 6" fill="none" stroke="#b8b8b8" stroke-width="1.3"/><path d="M10 12h5M12.5 9.5v5" stroke="#b8b8b8" stroke-width="1.3"/></svg>
<svg style="left:476px;top:369px;" width="14" height="16" viewBox="0 0 14 16"><path fill="#2e2e2e" d="M0 5C3 1 8 0 10 3L12 1 13 9 6 8 8 6C6 4 3 4 0 5Z"/><path fill="#2e2e2e" d="M14 11C11 15 6 16 4 13L2 15 1 7 8 8 6 10C8 12 11 12 14 11Z"/></svg>
<svg style="left:502px;top:369px;" width="10" height="16" viewBox="0 0 10 16"><circle cx="5" cy="2.2" r="2.2" fill="#333"/><path fill="#333" d="M1.5 6h5v8h2v2h-8v-2h2v-6h-1z"/></svg>
<div style="left:521px;top:370px;width:1px;height:15px;background:#f0f2f5;"></div>
<div style="left:527.0px;top:368.0px;line-height:18px;font-size:12px;color:#1a1a1a;transform:scaleX(1.020);">1/2</div>
<div style="left:578px;top:379px;width:10px;height:10px;background:linear-gradient(#e8e8e8,#b8b8b8);"></div>
<svg style="left:579px;top:381px;" width="8" height="7" viewBox="0 0 8 7"><rect x="1" y="0" width="6" height="1" fill="#222"/><path d="M0.5 2.5h7l-3.5 4z" fill="#222"/></svg>
<div style="left:13.0px;top:388.5px;line-height:18px;font-size:12px;color:#141414;font-weight:bold;transform:scaleX(0.972);">Ansprechpartner</div>
<div style="left:13.0px;top:407.7px;line-height:18px;font-size:12px;color:#141414;transform:scaleX(0.943);">An / Titel</div>
<div style="left:68px;top:407px;width:66px;height:19px;background:#f2f2f2;"></div>
<div style="left:118px;top:407px;width:16px;height:19px;background:#e9e9e9;"></div>
<svg style="left:122.5px;top:415.0px;" width="7" height="4" viewBox="0 0 7 4"><path d="M0 0h7l-3.5 4z" fill="#111"/></svg>
<div style="left:71.5px;top:408.0px;line-height:18px;font-size:12px;color:#141414;transform:scaleX(0.880);">Herr</div>
<div style="left:137px;top:407px;width:176px;height:20px;background:#f4f4f4;box-sizing:border-box;border:1px solid #a8a8a8;"></div>
<div style="left:13.0px;top:428.0px;line-height:18px;font-size:12px;color:#141414;transform:scaleX(0.854);">Vorname</div>
<div style="left:68px;top:427px;width:245px;height:20px;background:#f4f4f4;box-sizing:border-box;border:1px solid #a8a8a8;"></div>
<div style="left:71.0px;top:428.5px;line-height:18px;font-size:12px;color:#141414;transform:scaleX(0.941);">Lothar</div>
<div style="left:13.0px;top:448.5px;line-height:18px;font-size:12px;color:#141414;transform:scaleX(0.880);">Name</div>
<div style="left:68px;top:448px;width:245px;height:19px;background:#f2ece2;box-sizing:border-box;border:1px solid #a8a8a8;"></div>
<div style="left:71.0px;top:449.0px;line-height:18px;font-size:12px;color:#141414;font-weight:bold;transform:scaleX(0.977);">Hellwig</div>
<div style="left:13.0px;top:468.5px;line-height:18px;font-size:12px;color:#141414;transform:scaleX(0.880);">Telefon</div>
<div style="left:68px;top:467px;width:216px;height:20px;background:#f4f4f4;box-sizing:border-box;border:1px solid #a8a8a8;"></div>
<div style="left:71.0px;top:468.5px;line-height:18px;font-size:12px;color:#141414;transform:scaleX(0.880);">+49 (33932) 60 245</div>
<div style="left:284px;top:467px;width:29px;height:20px;background:#ececec;box-sizing:border-box;border:1px solid #d2d2d2;"></div>
<svg style="left:292px;top:471px;" width="14" height="13" viewBox="0 0 14 13"><path d="M1 1h12v3h-2v-1.5h-8v1.5h-2z" fill="#9a9a9a"/><rect x="2" y="4.5" width="10" height="8" fill="#9a9a9a"/><rect x="4" y="6.5" width="3" height="4" fill="#e6e6e6"/><path d="M8.5 7h2M8.5 9h2" stroke="#e6e6e6" stroke-width="1"/></svg>
<div style="left:13.0px;top:488.5px;line-height:18px;font-size:12px;color:#141414;transform:scaleX(0.880);">Telefax</div>
<div style="left:68px;top:487px;width:216px;height:20px;background:#f4f4f4;box-sizing:border-box;border:1px solid #a8a8a8;"></div>
<div style="left:284px;top:487px;width:29px;height:20px;background:#ececec;box-sizing:border-box;border:1px solid #d2d2d2;"></div>
<svg style="left:292px;top:491px;" width="14" height="12" viewBox="0 0 14 12"><path d="M1 6h12v6h-12z" fill="#9a9a9a"/><path d="M4 6l2-5h7l-2 5" fill="none" stroke="#9a9a9a" stroke-width="1.3"/></svg>
<div style="left:13.0px;top:508.0px;line-height:18px;font-size:12px;color:#141414;transform:scaleX(0.880);">Mobil</div>
<div style="left:68px;top:507px;width:216px;height:20px;background:#f4f4f4;box-sizing:border-box;border:1px solid #a8a8a8;"></div>
<div style="left:71.0px;top:508.5px;line-height:18px;font-size:12px;color:#141414;transform:scaleX(0.880);">+49 (170) 800 11 55</div>
<div style="left:284px;top:507px;width:29px;height:20px;background:#ececec;box-sizing:border-box;border:1px solid #d2d2d2;"></div>
<svg style="left:292px;top:511px;" width="14" height="13" viewBox="0 0 14 13"><path d="M1 1h12v3h-2v-1.5h-8v1.5h-2z" fill="#9a9a9a"/><rect x="2" y="4.5" width="10" height="8" fill="#9a9a9a"/><rect x="4" y="6.5" width="3" height="4" fill="#e6e6e6"/><path d="M8.5 7h2M8.5 9h2" stroke="#e6e6e6" stroke-width="1"/></svg>
<div style="left:13.0px;top:527.5px;line-height:18px;font-size:12px;color:#141414;transform:scaleX(0.880);">E-Mail</div>
<div style="left:68px;top:527px;width:216px;height:20px;background:#f4f4f4;box-sizing:border-box;border:1px solid #a8a8a8;"></div>
<div style="left:71.0px;top:528.5px;line-height:18px;font-size:12px;color:#141414;transform:scaleX(0.880);">lothar@hellot.de</div>
<div style="left:284px;top:527px;width:29px;height:20px;background:#ececec;box-sizing:border-box;border:1px solid #d2d2d2;"></div>
<svg style="left:292px;top:531px;" width="14" height="13" viewBox="0 0 14 13"><rect x="1" y="1" width="12" height="11" rx="2" fill="none" stroke="#9a9a9a" stroke-width="1.2"/><circle cx="7" cy="6.5" r="2.3" fill="none" stroke="#9a9a9a" stroke-width="1.3"/><path d="M9.3 5v3a1.5 1.5 0 0 0 3 0" fill="none" stroke="#9a9a9a" stroke-width="1"/></svg>
<div style="left:319px;top:426px;width:263px;height:124px;background:#f3f3f4;box-sizing:border-box;border:1px solid #b9b9b9;"></div>
<div style="left:364px;top:409px;width:42px;height:18px;background:linear-gradient(#f0f0f0,#e3e3e3);box-sizing:border-box;border:1px solid #b9b9b9;"></div>
<div style="left:372.5px;top:409.0px;line-height:18px;font-size:12px;color:#141414;transform:scaleX(0.848);">Privat</div>
<div style="left:405px;top:409px;width:43px;height:18px;background:linear-gradient(#f0f0f0,#e3e3e3);box-sizing:border-box;border:1px solid #b9b9b9;"></div>
<div style="left:412.0px;top:409.0px;line-height:18px;font-size:12px;color:#141414;transform:scaleX(0.900);">Memo</div>
<div style="left:447px;top:409px;width:52px;height:18px;background:linear-gradient(#f0f0f0,#e3e3e3);box-sizing:border-box;border:1px solid #b9b9b9;"></div>
<div style="left:451.0px;top:409.0px;line-height:18px;font-size:12px;color:#141414;transform:scaleX(0.964);">Anschrift</div>
<div style="left:319px;top:406px;width:46px;height:21px;background:#f4f4f5;box-sizing:border-box;border:1px solid #b9b9b9;border-bottom:none;"></div>
<div style="left:327.5px;top:407.0px;line-height:18px;font-size:12px;color:#141414;transform:scaleX(0.833);">Foto</div>
<div style="left:500px;top:405px;width:27px;height:22px;background:#ececec;box-sizing:border-box;border:1px solid #d0d0d0;"></div>
<div style="left:527px;top:405px;width:26px;height:22px;background:#ececec;box-sizing:border-box;border:1px solid #d0d0d0;"></div>
<div style="left:553px;top:405px;width:28px;height:22px;background:#ececec;box-sizing:border-box;border:1px solid #d0d0d0;"></div>
<svg style="left:506px;top:409px;" width="14" height="16" viewBox="0 0 14 16"><rect x="1" y="2.5" width="12" height="13" rx="1.5" fill="none" stroke="#333" stroke-width="2"/><rect x="4" y="0.5" width="6" height="4" rx="1" fill="#333"/><rect x="4" y="7" width="6" height="1.6" fill="#333"/><rect x="4" y="10.5" width="6" height="1.6" fill="#333"/></svg>
<svg style="left:533px;top:409px;" width="13" height="15" viewBox="0 0 13 15"><path d="M0 0h9l4 4v11h-13z" fill="#555"/><path d="M2 4h7M2 7h9M2 10h9M2 13h9" stroke="#ececec" stroke-width="1"/></svg>
<svg style="left:560px;top:411px;" width="14" height="11" viewBox="0 0 14 11"><rect x="0.5" y="1" width="13" height="9" fill="#9a9a9a"/><path d="M0.5 1.5l6.5 4.5 6.5-4.5" stroke="#e8e8e8" stroke-width="1.2" fill="none"/></svg>
<div style="left:323px;top:428px;width:255px;height:119px;background:#e9ebf0;"></div>
<div style="left:329.5px;top:429.0px;line-height:18px;font-size:12px;color:#141414;transform:scaleX(0.859);">Abteilung</div>
<div style="left:329px;top:446px;width:148px;height:20px;background:#f4f4f4;box-sizing:border-box;border:1px solid #a8a8a8;"></div>
<div style="left:332.0px;top:447.5px;line-height:18px;font-size:12px;color:#141414;transform:scaleX(0.875);">Entwicklung</div>
<div style="left:329.5px;top:464.0px;line-height:18px;font-size:12px;color:#141414;transform:scaleX(0.869);">Funktion</div>
<div style="left:329px;top:481px;width:148px;height:20px;background:#f4f4f4;box-sizing:border-box;border:1px solid #a8a8a8;"></div>
<div style="left:332.0px;top:482.5px;line-height:18px;font-size:12px;color:#141414;transform:scaleX(0.887);">Geschäftsführung</div>
<div style="left:329.5px;top:501.0px;line-height:18px;font-size:12px;color:#141414;transform:scaleX(0.853);">Anrede</div>
<div style="left:329px;top:518px;width:148px;height:20px;background:#f4f4f4;box-sizing:border-box;border:1px solid #a8a8a8;"></div>
<div style="left:480px;top:431px;width:100px;height:82px;background:#f4f4f4;box-sizing:border-box;border:1px solid #6e6e6e;"></div>
<div style="left:501px;top:432px;width:58px;height:79px;background:#2a3a22;"></div>
<svg style="left:501px;top:432px;filter:blur(0.8px);" width="58" height="79" viewBox="0 0 58 79"><defs><radialGradient id="fc" cx=".45" cy=".45" r=".6"><stop offset="0" stop-color="#d8b0a0"/><stop offset=".6" stop-color="#c49484"/><stop offset="1" stop-color="#946a58"/></radialGradient><linearGradient id="hr" x1="0" y1="0" x2="0" y2="1"><stop offset="0" stop-color="#e2e2de"/><stop offset="1" stop-color="#b0b2ae"/></linearGradient></defs><rect width="58" height="79" fill="#2a3a22"/><path d="M0 0h12l-2 16 2 18-12 6z" fill="#42583a"/><path d="M44 0h14v44l-8-10-4-18z" fill="#364c2e"/><path d="M50 20l5 2-2 8z" fill="#c8d0c0"/><path d="M0 48l8-4 6 6-2 12h-12z" fill="#c6cac4"/><path d="M6 50l4 14" stroke="#2a3a24" stroke-width="2"/><path d="M0 62q8-6 16-4l14 10 14-18 14 6v23h-58z" fill="#dcdfe4"/><path d="M16 58l12 21h14l6-26-16 14z" fill="#a8b2bf"/><path d="M42 50l16 7v22h-10z" fill="#eceff2"/><path d="M12 58l4 21h-4z" fill="#b8c0cc"/><path d="M20 52q8 12 22 2l-2 8q-9 8-18 0z" fill="#a07262"/><path d="M11 32q0-16 18-16 19 0 19 16v8q-1 14-8 20-6 5-11 5-6-1-11-7-7-8-7-20z" fill="url(#fc)"/><ellipse cx="46.5" cy="36" rx="3" ry="6.5" fill="#b08070"/><ellipse cx="11.5" cy="37" rx="2" ry="5" fill="#b88a78"/><path d="M9 32q-3-18 5-24 8-6 17-5 12 1 15 10 2 8 0 18l-2-9q-3-5-9-6-7-1-13 1-7 2-11 8z" fill="url(#hr)"/><path d="M18 33q4-2 8 0M32 33q4-2 8 0" stroke="#6a4a3c" stroke-width="1.4" fill="none"/><path d="M29 36l-2 8h5" stroke="#9a6a58" stroke-width="1.1" fill="none"/><path d="M21 48q7 3 14-1" stroke="#5a3a30" stroke-width="2" fill="none"/></svg>
<div style="left:480px;top:516px;width:73px;height:23px;background:#ececec;box-sizing:border-box;border:1px solid #cfcfcf;"></div>
<div style="left:506.5px;top:518.5px;line-height:18px;font-size:12px;color:#141414;transform:scaleX(0.899);">Bild</div>
<div style="left:552px;top:516px;width:28px;height:23px;background:#ececec;box-sizing:border-box;border:1px solid #cfcfcf;"></div>
<div style="left:560.5px;top:518.5px;line-height:18px;font-size:12px;color:#141414;transform:scaleX(1.000);">V</div>
<div style="left:3px;top:555px;width:583px;height:16px;background:#eceef1;"></div>
<div style="left:8.0px;top:555.0px;line-height:18px;font-size:12px;color:#141414;transform:scaleX(0.886);">An</div>
<div style="left:48.0px;top:555.0px;line-height:18px;font-size:12px;color:#141414;transform:scaleX(0.900);">Titel</div>
<div style="left:108.0px;top:555.0px;line-height:18px;font-size:12px;color:#141414;transform:scaleX(0.854);">Vorname</div>
<div style="left:208.5px;top:555.0px;line-height:18px;font-size:12px;color:#141414;transform:scaleX(0.843);">Name</div>
<div style="left:307.5px;top:555.0px;line-height:18px;font-size:12px;color:#141414;transform:scaleX(0.889);">Zusatz</div>
<div style="left:408.0px;top:555.0px;line-height:18px;font-size:12px;color:#141414;transform:scaleX(0.869);">Funktion</div>
<div style="left:508.0px;top:555.0px;line-height:18px;font-size:12px;color:#141414;transform:scaleX(0.879);">Abteilung</div>
<div style="left:3px;top:571px;width:583px;height:188px;background:#cfd6e0;"></div>
<div style="left:3px;top:571px;width:583px;height:17px;background:#7e96c1;"></div>
<div style="left:6.0px;top:571.0px;line-height:18px;font-size:12px;color:#505a66;transform:scaleX(0.814);">Herr</div>
<div style="left:106.5px;top:571.0px;line-height:18px;font-size:12px;color:#505a66;transform:scaleX(0.882);">Lothar</div>
<div style="left:206.5px;top:571.0px;line-height:18px;font-size:12px;color:#505a66;transform:scaleX(0.853);">Hellwig</div>
<div style="left:405.5px;top:571.0px;line-height:18px;font-size:12px;color:#505a66;transform:scaleX(0.887);">Geschäftsführung</div>
<div style="left:506.0px;top:571.0px;line-height:18px;font-size:12px;color:#505a66;transform:scaleX(0.890);">Entwicklung</div>
<div style="left:6.0px;top:588.0px;line-height:18px;font-size:12px;color:#141414;transform:scaleX(0.811);">Frau</div>
<div style="left:106.5px;top:588.0px;line-height:18px;font-size:12px;color:#141414;transform:scaleX(0.869);">Deborah Marie</div>
<div style="left:206.5px;top:588.0px;line-height:18px;font-size:12px;color:#141414;transform:scaleX(0.869);">Habener</div>
<div style="left:405.5px;top:588.0px;line-height:18px;font-size:12px;color:#141414;transform:scaleX(0.886);">Webdesign</div>
<div style="left:506.0px;top:588.0px;line-height:18px;font-size:12px;color:#141414;transform:scaleX(0.886);">Webdesign</div>
<div style="left:40.0px;top:747.5px;line-height:17px;font-size:11px;color:#dfe3ea;transform:scaleX(0.950);">Blog</div>
<div style="left:3px;top:759px;width:583px;height:18px;background:#ececec;"></div>
<div style="left:20px;top:760px;width:128px;height:15px;background:#c8c8c8;"></div>
<svg style="left:8px;top:763px;" width="6" height="9" viewBox="0 0 6 9"><path d="M5 .5l-4 4 4 4" stroke="#333" stroke-width="1.6" fill="none"/></svg>
<svg style="left:574px;top:763px;" width="6" height="9" viewBox="0 0 6 9"><path d="M1 .5l4 4-4 4" stroke="#333" stroke-width="1.6" fill="none"/></svg>
<div style="left:597px;top:92px;width:189px;height:23px;background:#4b5f87;"></div>
<svg style="left:602px;top:95px;" width="16" height="18" viewBox="0 0 16 18"><path d="M0 0h9l4 4v13h-13z" fill="#6e625a"/><path d="M2 4h6M2 7h8M2 10h8" stroke="#8a8078" stroke-width="1.2"/><path d="M12 9v8M8 13h8" stroke="#7a6e66" stroke-width="2.2"/></svg>
<div style="left:620.0px;top:95.0px;line-height:18px;font-size:12px;color:#f2f4f8;transform:scaleX(0.846);">Standard-Vorgänge anlegen</div>
<div style="left:594px;top:122px;width:195px;height:4px;background:#d6d9de;"></div>
<div style="left:602.0px;top:124.0px;line-height:18px;font-size:12px;color:#141414;font-weight:bold;transform:scaleX(0.918);">Vorgänge</div>
<div style="left:599px;top:143px;width:180px;height:20px;background:#f2ece2;box-sizing:border-box;border:1px solid #a8a8a8;"></div>
<div style="left:602.0px;top:144.5px;line-height:18px;font-size:12px;color:#141414;font-weight:bold;transform:scaleX(0.945);">_Fliegen</div>
<div style="left:602.0px;top:163.0px;line-height:18px;font-size:12px;color:#9a9a9a;transform:scaleX(0.857);">Projekt</div>
<div style="left:599px;top:181px;width:180px;height:47px;background:#f4f4f4;box-sizing:border-box;border:1px solid #a8a8a8;"></div>
<div style="left:764px;top:182px;width:14px;height:45px;background:#eeeeee;"></div>
<svg style="left:767px;top:190px;" width="9" height="6" viewBox="0 0 9 6"><path d="M0 4l4-4 4 4" transform="translate(.5 .8)" stroke="#aaa" stroke-width="1.5" fill="none"/></svg>
<svg style="left:767px;top:213px;" width="9" height="6" viewBox="0 0 9 6"><path d="M0 0l4 4 4-4" transform="translate(.5 .8)" stroke="#aaa" stroke-width="1.5" fill="none"/></svg>
<div style="left:602.3px;top:232.7px;line-height:18px;font-size:12px;color:#141414;transform:scaleX(0.907);">Start:</div>
<div style="left:630px;top:231px;width:106px;height:20px;background:#f4f4f4;box-sizing:border-box;border:1px solid #d6d6d6;"></div>
<div style="left:633px;top:234px;width:13px;height:13px;background:#f8f8f8;box-sizing:border-box;border:1px solid #3d7bbf;"></div>
<svg style="left:634px;top:235px;" width="11" height="11" viewBox="0 0 11 11"><path d="M2 5.5l2.5 3 5-7" stroke="#111" stroke-width="1.8" fill="none"/></svg>
<div style="left:649.0px;top:232.5px;line-height:18px;font-size:12px;color:#141414;transform:scaleX(0.900);">23.03.2004</div>
<svg style="left:724px;top:238px;" width="9" height="6" viewBox="0 0 9 6"><path d="M0 0l4 4 4-4" transform="translate(.5 .8)" stroke="#333" stroke-width="1.5" fill="none"/></svg>
<div style="left:738px;top:234px;width:13px;height:13px;background:#f8f8f8;box-sizing:border-box;border:1px solid #777;"></div>
<div style="left:757.5px;top:232.5px;line-height:18px;font-size:12px;color:#141414;transform:scaleX(0.778);">Erl.</div>
<div style="left:600px;top:260px;width:180px;height:24px;background:#4b5f87;"></div>
<svg style="left:604px;top:263px;" width="18" height="20" viewBox="0 0 18 20"><g opacity=".55"><path d="M5 7l6-6 6 6v10h-12z" fill="#8a8a3a"/><path d="M1 10l6-6 6 6v9h-12z" fill="#a03878"/><path d="M2 12l5 3 5-3" stroke="#d060a0" fill="none"/></g></svg>
<div style="left:634.3px;top:263.2px;line-height:18px;font-size:12px;color:#f2f4f8;transform:scaleX(0.898);">Dokument verschicken</div>
<div style="left:594px;top:293px;width:179px;height:16px;background:#eceef1;"></div>
<div style="left:599.7px;top:293.0px;line-height:18px;font-size:12px;color:#141414;transform:scaleX(0.722);">Erl.</div>
<div style="left:621.0px;top:293.0px;line-height:18px;font-size:12px;color:#141414;transform:scaleX(0.854);">Betreff</div>
<div style="left:710.0px;top:293.0px;line-height:18px;font-size:12px;color:#141414;transform:scaleX(0.829);">Start</div>
<div style="left:594px;top:309px;width:179px;height:468px;background:#cfd6e0;"></div>
<div style="left:773px;top:293px;width:16px;height:484px;background:#e9e9e9;"></div>
<svg style="left:777px;top:300px;" width="9" height="6" viewBox="0 0 9 6"><path d="M0 4l4-4 4 4" transform="translate(.5 .8)" stroke="#555" stroke-width="1.5" fill="none"/></svg>
<svg style="left:777px;top:766px;" width="9" height="6" viewBox="0 0 9 6"><path d="M0 0l4 4 4-4" transform="translate(.5 .8)" stroke="#555" stroke-width="1.5" fill="none"/></svg>
<div style="left:774px;top:311px;width:14px;height:396px;background:#c8c8c8;"></div>
<div style="left:600px;top:312px;width:10px;height:10px;background:#eef0f3;box-sizing:border-box;border:1px solid #2a2a2a;border-right-color:#f6f6f6;border-bottom-color:#f6f6f6;border-width:1.5px 1px 1px 1.5px;"></div>
<div style="left:619.0px;top:309.0px;line-height:18px;font-size:12px;color:#141414;transform:scaleX(0.880);">__Änderungen</div>
<div style="left:708.0px;top:309.0px;line-height:18px;font-size:12px;color:#141414;transform:scaleX(0.916);">03.03.2003</div>
<div style="left:600px;top:329px;width:10px;height:10px;background:#eef0f3;box-sizing:border-box;border:1px solid #2a2a2a;border-right-color:#f6f6f6;border-bottom-color:#f6f6f6;border-width:1.5px 1px 1px 1.5px;"></div>
<div style="left:619.0px;top:326.0px;line-height:18px;font-size:12px;color:#141414;transform:scaleX(0.880);">__Gleitschirm</div>
<div style="left:708.0px;top:326.0px;line-height:18px;font-size:12px;color:#141414;transform:scaleX(0.916);">18.06.2003</div>
<div style="left:600px;top:346px;width:10px;height:10px;background:#eef0f3;box-sizing:border-box;border:1px solid #2a2a2a;border-right-color:#f6f6f6;border-bottom-color:#f6f6f6;border-width:1.5px 1px 1px 1.5px;"></div>
<div style="left:619.0px;top:343.0px;line-height:18px;font-size:12px;color:#141414;transform:scaleX(0.880);">__Urlaub</div>
<div style="left:708.0px;top:343.0px;line-height:18px;font-size:12px;color:#141414;transform:scaleX(0.916);">03.12.2013</div>
<div style="left:594px;top:360px;width:179px;height:17px;background:#7e96c1;"></div>
<div style="left:600px;top:363px;width:10px;height:10px;background:#c4cddc;box-sizing:border-box;border:1px solid #2a2a2a;border-right-color:#f6f6f6;border-bottom-color:#f6f6f6;border-width:1.5px 1px 1px 1.5px;"></div>
<div style="left:619.0px;top:360.0px;line-height:18px;font-size:12px;color:#505a66;transform:scaleX(0.880);">_Fliegen</div>
<div style="left:708.0px;top:360.0px;line-height:18px;font-size:12px;color:#505a66;transform:scaleX(0.916);">23.03.2004</div>
<div style="left:600px;top:380px;width:10px;height:10px;background:#eef0f3;box-sizing:border-box;border:1px solid #2a2a2a;border-right-color:#f6f6f6;border-bottom-color:#f6f6f6;border-width:1.5px 1px 1px 1.5px;"></div>
<div style="left:619.0px;top:377.0px;line-height:18px;font-size:12px;color:#141414;transform:scaleX(0.880);">_Microsoft Help</div>
<div style="left:708.0px;top:377.0px;line-height:18px;font-size:12px;color:#141414;transform:scaleX(0.916);">02.12.2003</div>
<div style="left:600px;top:397px;width:10px;height:10px;background:#eef0f3;box-sizing:border-box;border:1px solid #2a2a2a;border-right-color:#f6f6f6;border-bottom-color:#f6f6f6;border-width:1.5px 1px 1px 1.5px;"></div>
<div style="left:619.0px;top:394.0px;line-height:18px;font-size:12px;color:#141414;transform:scaleX(0.880);">_Silvester Istan...</div>
<div style="left:708.0px;top:394.0px;line-height:18px;font-size:12px;color:#141414;transform:scaleX(0.930);">05.11.2013</div>
<div style="left:600px;top:414px;width:10px;height:10px;background:#eef0f3;box-sizing:border-box;border:1px solid #2a2a2a;border-right-color:#f6f6f6;border-bottom-color:#f6f6f6;border-width:1.5px 1px 1px 1.5px;"></div>
<div style="left:619.0px;top:411.0px;line-height:18px;font-size:12px;color:#141414;transform:scaleX(0.880);">_Software</div>
<div style="left:708.0px;top:411.0px;line-height:18px;font-size:12px;color:#141414;transform:scaleX(0.916);">27.12.2003</div>
<div style="left:600px;top:431px;width:10px;height:10px;background:#eef0f3;box-sizing:border-box;border:1px solid #2a2a2a;border-right-color:#f6f6f6;border-bottom-color:#f6f6f6;border-width:1.5px 1px 1px 1.5px;"></div>
<div style="left:619.0px;top:428.0px;line-height:18px;font-size:12px;color:#141414;transform:scaleX(0.880);">allg. Korrespon...</div>
<div style="left:708.0px;top:428.0px;line-height:18px;font-size:12px;color:#141414;transform:scaleX(0.916);">16.06.2010</div>
<div style="left:600px;top:448px;width:10px;height:10px;background:#eef0f3;box-sizing:border-box;border:1px solid #2a2a2a;border-right-color:#f6f6f6;border-bottom-color:#f6f6f6;border-width:1.5px 1px 1px 1.5px;"></div>
<div style="left:619.0px;top:445.0px;line-height:18px;font-size:12px;color:#141414;transform:scaleX(0.880);">Asus</div>
<div style="left:708.0px;top:445.0px;line-height:18px;font-size:12px;color:#141414;transform:scaleX(0.916);">19.02.2013</div>
<div style="left:600px;top:465px;width:10px;height:10px;background:#eef0f3;box-sizing:border-box;border:1px solid #2a2a2a;border-right-color:#f6f6f6;border-bottom-color:#f6f6f6;border-width:1.5px 1px 1px 1.5px;"></div>
<div style="left:619.0px;top:462.0px;line-height:18px;font-size:12px;color:#141414;transform:scaleX(0.880);">Bestellungen</div>
<div style="left:708.0px;top:462.0px;line-height:18px;font-size:12px;color:#141414;transform:scaleX(0.930);">02.11.2002</div>
<div style="left:600px;top:482px;width:10px;height:10px;background:#eef0f3;box-sizing:border-box;border:1px solid #2a2a2a;border-right-color:#f6f6f6;border-bottom-color:#f6f6f6;border-width:1.5px 1px 1px 1.5px;"></div>
<div style="left:619.0px;top:479.0px;line-height:18px;font-size:12px;color:#141414;transform:scaleX(0.880);">Bewerbungen</div>
<div style="left:708.0px;top:479.0px;line-height:18px;font-size:12px;color:#141414;transform:scaleX(0.916);">19.06.2009</div>
<div style="left:600px;top:499px;width:10px;height:10px;background:#eef0f3;box-sizing:border-box;border:1px solid #2a2a2a;border-right-color:#f6f6f6;border-bottom-color:#f6f6f6;border-width:1.5px 1px 1px 1.5px;"></div>
<div style="left:619.0px;top:496.0px;line-height:18px;font-size:12px;color:#141414;transform:scaleX(0.880);">bNICE</div>
<div style="left:708.0px;top:496.0px;line-height:18px;font-size:12px;color:#141414;transform:scaleX(0.930);">24.11.2013</div>
<div style="left:600px;top:516px;width:10px;height:10px;background:#eef0f3;box-sizing:border-box;border:1px solid #2a2a2a;border-right-color:#f6f6f6;border-bottom-color:#f6f6f6;border-width:1.5px 1px 1px 1.5px;"></div>
<div style="left:619.0px;top:513.0px;line-height:18px;font-size:12px;color:#141414;transform:scaleX(0.880);">bNICE SV</div>
<div style="left:708.0px;top:513.0px;line-height:18px;font-size:12px;color:#141414;transform:scaleX(0.916);">21.03.2014</div>
<div style="left:600px;top:533px;width:10px;height:10px;background:#eef0f3;box-sizing:border-box;border:1px solid #2a2a2a;border-right-color:#f6f6f6;border-bottom-color:#f6f6f6;border-width:1.5px 1px 1px 1.5px;"></div>
<div style="left:619.0px;top:530.0px;line-height:18px;font-size:12px;color:#141414;transform:scaleX(0.880);">bNICE Webein...</div>
<div style="left:708.0px;top:530.0px;line-height:18px;font-size:12px;color:#141414;transform:scaleX(0.930);">19.11.2012</div>
<div style="left:600px;top:550px;width:10px;height:10px;background:#eef0f3;box-sizing:border-box;border:1px solid #2a2a2a;border-right-color:#f6f6f6;border-bottom-color:#f6f6f6;border-width:1.5px 1px 1px 1.5px;"></div>
<div style="left:619.0px;top:547.0px;line-height:18px;font-size:12px;color:#141414;transform:scaleX(0.880);">Familie</div>
<div style="left:708.0px;top:547.0px;line-height:18px;font-size:12px;color:#141414;transform:scaleX(0.916);">06.05.2013</div>
<div style="left:600px;top:567px;width:10px;height:10px;background:#eef0f3;box-sizing:border-box;border:1px solid #2a2a2a;border-right-color:#f6f6f6;border-bottom-color:#f6f6f6;border-width:1.5px 1px 1px 1.5px;"></div>
<div style="left:619.0px;top:564.0px;line-height:18px;font-size:12px;color:#141414;transform:scaleX(0.880);">Firmenangeleg...</div>
<div style="left:708.0px;top:564.0px;line-height:18px;font-size:12px;color:#141414;transform:scaleX(0.916);">16.03.2002</div>
<div style="left:600px;top:584px;width:10px;height:10px;background:#eef0f3;box-sizing:border-box;border:1px solid #2a2a2a;border-right-color:#f6f6f6;border-bottom-color:#f6f6f6;border-width:1.5px 1px 1px 1.5px;"></div>
<div style="left:619.0px;top:581.0px;line-height:18px;font-size:12px;color:#141414;transform:scaleX(0.880);">Flestrom</div>
<div style="left:708.0px;top:581.0px;line-height:18px;font-size:12px;color:#141414;transform:scaleX(0.916);">10.07.2009</div>
<div style="left:600px;top:601px;width:10px;height:10px;background:#eef0f3;box-sizing:border-box;border:1px solid #2a2a2a;border-right-color:#f6f6f6;border-bottom-color:#f6f6f6;border-width:1.5px 1px 1px 1.5px;"></div>
<div style="left:619.0px;top:598.0px;line-height:18px;font-size:12px;color:#141414;transform:scaleX(0.880);">frag einen Anwalt</div>
<div style="left:708.0px;top:598.0px;line-height:18px;font-size:12px;color:#141414;transform:scaleX(0.930);">12.07.2011</div>
<div style="left:600px;top:618px;width:10px;height:10px;background:#eef0f3;box-sizing:border-box;border:1px solid #2a2a2a;border-right-color:#f6f6f6;border-bottom-color:#f6f6f6;border-width:1.5px 1px 1px 1.5px;"></div>
<div style="left:619.0px;top:615.0px;line-height:18px;font-size:12px;color:#141414;transform:scaleX(0.880);">FreeLancer</div>
<div style="left:708.0px;top:615.0px;line-height:18px;font-size:12px;color:#141414;transform:scaleX(0.916);">09.06.2010</div>
<div style="left:600px;top:635px;width:10px;height:10px;background:#eef0f3;box-sizing:border-box;border:1px solid #2a2a2a;border-right-color:#f6f6f6;border-bottom-color:#f6f6f6;border-width:1.5px 1px 1px 1.5px;"></div>
<div style="left:619.0px;top:632.0px;line-height:18px;font-size:12px;color:#141414;transform:scaleX(0.880);">Gewerbeausku...</div>
<div style="left:600px;top:652px;width:10px;height:10px;background:#eef0f3;box-sizing:border-box;border:1px solid #2a2a2a;border-right-color:#f6f6f6;border-bottom-color:#f6f6f6;border-width:1.5px 1px 1px 1.5px;"></div>
<div style="left:619.0px;top:649.0px;line-height:18px;font-size:12px;color:#141414;transform:scaleX(0.880);">Grundstücksan...</div>
<div style="left:708.0px;top:649.0px;line-height:18px;font-size:12px;color:#141414;transform:scaleX(0.916);">05.07.2014</div>
<div style="left:600px;top:669px;width:10px;height:10px;background:#eef0f3;box-sizing:border-box;border:1px solid #2a2a2a;border-right-color:#f6f6f6;border-bottom-color:#f6f6f6;border-width:1.5px 1px 1px 1.5px;"></div>
<div style="left:619.0px;top:666.0px;line-height:18px;font-size:12px;color:#141414;transform:scaleX(0.880);">Grundstücksan...</div>
<div style="left:708.0px;top:666.0px;line-height:18px;font-size:12px;color:#141414;transform:scaleX(0.916);">09.07.2014</div>
<div style="left:600px;top:686px;width:10px;height:10px;background:#eef0f3;box-sizing:border-box;border:1px solid #2a2a2a;border-right-color:#f6f6f6;border-bottom-color:#f6f6f6;border-width:1.5px 1px 1px 1.5px;"></div>
<div style="left:619.0px;top:683.0px;line-height:18px;font-size:12px;color:#141414;transform:scaleX(0.880);">Infomappe</div>
<div style="left:708.0px;top:683.0px;line-height:18px;font-size:12px;color:#141414;transform:scaleX(0.916);">25.03.2014</div>
<div style="left:600px;top:703px;width:10px;height:10px;background:#eef0f3;box-sizing:border-box;border:1px solid #2a2a2a;border-right-color:#f6f6f6;border-bottom-color:#f6f6f6;border-width:1.5px 1px 1px 1.5px;"></div>
<div style="left:619.0px;top:700.0px;line-height:18px;font-size:12px;color:#141414;transform:scaleX(0.880);">Rechnen</div>
<div style="left:708.0px;top:700.0px;line-height:18px;font-size:12px;color:#141414;transform:scaleX(0.916);">29.10.2007</div>
<div style="left:600px;top:720px;width:10px;height:10px;background:#eef0f3;box-sizing:border-box;border:1px solid #2a2a2a;border-right-color:#f6f6f6;border-bottom-color:#f6f6f6;border-width:1.5px 1px 1px 1.5px;"></div>
<div style="left:619.0px;top:717.0px;line-height:18px;font-size:12px;color:#141414;transform:scaleX(0.880);">Schriftwechsel</div>
<div style="left:708.0px;top:717.0px;line-height:18px;font-size:12px;color:#141414;transform:scaleX(0.930);">24.11.2013</div>
<div style="left:600px;top:737px;width:10px;height:10px;background:#eef0f3;box-sizing:border-box;border:1px solid #2a2a2a;border-right-color:#f6f6f6;border-bottom-color:#f6f6f6;border-width:1.5px 1px 1px 1.5px;"></div>
<div style="left:619.0px;top:734.0px;line-height:18px;font-size:12px;color:#141414;transform:scaleX(0.880);">Urlaub</div>
<div style="left:708.0px;top:734.0px;line-height:18px;font-size:12px;color:#141414;transform:scaleX(0.916);">06.10.2002</div>
<div style="left:600px;top:754px;width:10px;height:10px;background:#eef0f3;box-sizing:border-box;border:1px solid #2a2a2a;border-right-color:#f6f6f6;border-bottom-color:#f6f6f6;border-width:1.5px 1px 1px 1.5px;"></div>
<div style="left:619.0px;top:751.0px;line-height:18px;font-size:12px;color:#141414;transform:scaleX(0.880);">VS 2012</div>
<div style="left:708.0px;top:751.0px;line-height:18px;font-size:12px;color:#141414;transform:scaleX(0.916);">15.04.2014</div>
<div style="left:600px;top:771px;width:10px;height:10px;background:#eef0f3;box-sizing:border-box;border:1px solid #2a2a2a;border-right-color:#f6f6f6;border-bottom-color:#f6f6f6;border-width:1.5px 1px 1px 1.5px;"></div>
<svg style="left:601px;top:772px;" width="9" height="9" viewBox="0 0 9 9"><path d="M1.2 4.5l2.3 2.8 4.5-6" stroke="#111" stroke-width="1.8" fill="none"/></svg>
<div style="left:619.0px;top:768.0px;line-height:18px;font-size:12px;color:#141414;transform:scaleX(0.880);">_SV Office</div>
<div style="left:708.0px;top:768.0px;line-height:18px;font-size:12px;color:#141414;transform:scaleX(0.916);">20.02.2003</div>
<div style="left:594px;top:776px;width:179px;height:1px;background:#e0e0e0;"></div>
<div style="left:801px;top:92px;width:132px;height:24px;background:#4b5f87;"></div>
<svg style="left:805px;top:95px;" width="24" height="21" viewBox="0 0 24 21"><path d="M3 8l9-7 9 7v11h-18z" fill="#c8ccd6" stroke="#9aa0ac" stroke-width=".8"/><path d="M6 9h12l-6 5z" fill="#4b5f87"/><path d="M14 13l4 4" stroke="#4b5f87" stroke-width="1.6"/><path d="M0 17l6-5v3h5v4h-5v2z" fill="#a050c0"/></svg>
<div style="left:827.5px;top:94.9px;line-height:18px;font-size:12px;color:#f2f4f8;transform:scaleX(0.868);">Antwort einlesen</div>
<div style="left:934px;top:92px;width:132px;height:24px;background:#4b5f87;"></div>
<svg style="left:938px;top:95px;" width="25" height="19" viewBox="0 0 25 19"><defs><linearGradient id="env" x1="0" y1="0" x2="0" y2="1"><stop offset="0" stop-color="#fff4b8"/><stop offset="1" stop-color="#e8c860"/></linearGradient></defs><rect x="0.5" y="0.5" width="24" height="18" fill="url(#env)" stroke="#c8a040"/><path d="M0.5 1l12 9 12-9" stroke="#c8a040" fill="none"/></svg>
<div style="left:957.0px;top:94.9px;line-height:18px;font-size:12px;color:#f2f4f8;transform:scaleX(0.872);">Outlook Mail einlesen</div>
<div style="left:1067px;top:92px;width:132px;height:24px;background:#4b5f87;"></div>
<svg style="left:1072px;top:95px;" width="22" height="19" viewBox="0 0 22 19"><rect x="0.5" y="2" width="21" height="16.5" fill="#dfe6f4" stroke="#7a90c0"/><rect x="0.5" y="0.5" width="21" height="4" fill="#4a70c0"/><g stroke="#9ab0d8" stroke-width=".8"><path d="M1 8h20M1 12h20M1 15.5h20M5.5 5v13M10.5 5v13M15.5 5v13"/></g><rect x="11" y="9" width="4" height="3" fill="none" stroke="#d04040"/></svg>
<div style="left:1096.0px;top:93.7px;line-height:18px;font-size:12px;color:#f2f4f8;transform:scaleX(0.868);">Termin in Outlook</div>
<div style="left:1200px;top:92px;width:78px;height:24px;background:#4b5f87;"></div>
<div style="left:1207.6px;top:97.0px;line-height:19px;font-size:13px;color:#111;font-weight:bold;transform:scaleX(1.012);">SMS</div>
<div style="left:1254.0px;top:95.0px;line-height:18px;font-size:12px;color:#f2f4f8;transform:scaleX(0.865);">SMS</div>
<div style="left:798px;top:122px;width:480px;height:4px;background:#d6d9de;"></div>
<div style="left:810.5px;top:124.0px;line-height:18px;font-size:12px;color:#141414;font-weight:bold;transform:scaleX(0.943);">Korrespondenz</div>
<div style="left:995.3px;top:126.0px;line-height:18px;font-size:12px;color:#1f2c9c;transform:scaleX(0.871);">Hellwig, Lothar:</div>
<div style="left:810.5px;top:143.4px;line-height:18px;font-size:12px;color:#141414;transform:scaleX(0.879);">Typ</div>
<div style="left:850px;top:144px;width:102px;height:20px;background:#f2ece2;"></div>
<div style="left:934px;top:144px;width:18px;height:20px;background:#ececec;"></div>
<svg style="left:939.5px;top:152.5px;" width="7" height="4" viewBox="0 0 7 4"><path d="M0 0h7l-3.5 4z" fill="#111"/></svg>
<div style="left:854.0px;top:145.0px;line-height:18px;font-size:12px;color:#111;font-weight:bold;transform:scaleX(0.962);">E-Mail</div>
<svg style="left:955px;top:146px;" width="13" height="13" viewBox="0 0 13 13"><path d="M0.5 9.5l5-5-2.5-2.5h9v9l-2.5-2.5-5 5z" fill="#333"/></svg>
<div style="left:995.3px;top:143.4px;line-height:18px;font-size:12px;color:#141414;transform:scaleX(0.860);">Empfänger</div>
<div style="left:1052px;top:143px;width:208px;height:20px;background:#f5d06f;"></div>
<div style="left:1243px;top:143px;width:17px;height:20px;background:#ececec;"></div>
<svg style="left:1248px;top:151.5px;" width="7" height="4" viewBox="0 0 7 4"><path d="M0 0h7l-3.5 4z" fill="#111"/></svg>
<div style="left:1055.7px;top:144.0px;line-height:18px;font-size:12px;color:#1a1a60;font-weight:bold;transform:scaleX(0.978);">Hellwig, Lothar:</div>
<div style="left:810.5px;top:163.4px;line-height:18px;font-size:12px;color:#141414;transform:scaleX(0.940);">Betreff</div>
<div style="left:849px;top:166px;width:421px;height:35px;background:#f2ece2;box-sizing:border-box;border:1px solid #a8a8a8;"></div>
<div style="left:852.4px;top:166.6px;line-height:18px;font-size:12px;color:#111;font-weight:bold;transform:scaleX(1.001);">Re: test senden</div>
<div style="left:810.5px;top:200.4px;line-height:18px;font-size:12px;color:#141414;transform:scaleX(0.840);">Memo</div>
<div style="left:849px;top:221px;width:421px;height:81px;background:#f3f3f4;box-sizing:border-box;border:1px solid #b9b9b9;"></div>
<div style="left:849px;top:202px;width:46px;height:20px;background:#f4f4f5;box-sizing:border-box;border:1px solid #b9b9b9;border-bottom:none;"></div>
<div style="left:857.0px;top:203.0px;line-height:18px;font-size:12px;color:#141414;transform:scaleX(0.840);">Memo</div>
<div style="left:853px;top:223px;width:415px;height:75px;background:#f6f6f6;box-sizing:border-box;border:1px solid #a8a8a8;"></div>
<div style="left:857.0px;top:224.6px;line-height:18px;font-size:12px;color:#1a1a1a;transform:scaleX(0.884);">Sehr geehrter Herr Hellwig,&lt;BR&gt;&lt;BR&gt;Ihre Nachricht vom 03.07.2014</div>
<div style="left:857.0px;top:237.0px;line-height:18px;font-size:12px;color:#1a1a1a;transform:scaleX(0.820);">--------------------------------</div>
<div style="left:857.0px;top:250.5px;line-height:18px;font-size:12px;color:#1a1a1a;transform:scaleX(0.883);">folgende Grundstücke stehen derzeit zur Verfügung:</div>
<div style="left:856.0px;top:264.0px;line-height:18px;font-size:12px;color:#1a1a1a;transform:scaleX(0.868);">OrtGrößeKaufpreis</div>
<div style="left:856.0px;top:277.0px;line-height:18px;font-size:12px;color:#1a1a1a;transform:scaleX(0.895);">15345 Rehfelde 468 m²22.932,00 €</div>
<div style="left:1247px;top:224px;width:17px;height:73px;background:#ececec;"></div>
<svg style="left:1251px;top:232px;" width="9" height="6" viewBox="0 0 9 6"><path d="M0 4l4-4 4 4" transform="translate(.5 .8)" stroke="#555" stroke-width="1.5" fill="none"/></svg>
<svg style="left:1251px;top:285px;" width="9" height="6" viewBox="0 0 9 6"><path d="M0 0l4 4 4-4" transform="translate(.5 .8)" stroke="#555" stroke-width="1.5" fill="none"/></svg>
<div style="left:1248px;top:243px;width:15px;height:17px;background:#c8c8c8;"></div>
<div style="left:807px;top:265px;width:34px;height:36px;background:#ececec;box-sizing:border-box;border:1px solid #c8c8c8;"></div>
<svg style="left:813px;top:270px;" width="22" height="27" viewBox="0 0 22 27"><path d="M2 0h11l7 7v18h-18z" fill="#a8a8a8"/><path d="M13 0v7h7" fill="#d8d8d8"/><circle cx="9" cy="16" r="4.5" fill="none" stroke="#333" stroke-width="2"/><path d="M6 19l-4 4" stroke="#333" stroke-width="2.6"/></svg>
<div style="left:808.7px;top:301.5px;line-height:17px;font-size:11px;color:#1c2c88;transform:scaleX(0.851);">\CRM_VS\Korrespondenz\2014\_Fliegen\Re_test_senden_E_Mail_00009356.bml</div>
<div style="left:1198px;top:302px;width:72px;height:20px;background:#ececec;box-sizing:border-box;border:1px solid #c8c8c8;"></div>
<div style="left:1207.5px;top:304.5px;line-height:17px;font-size:11px;color:#141414;transform:scaleX(0.857);">Textbaustein</div>
<div style="left:810.5px;top:318.0px;line-height:18px;font-size:12px;color:#141414;transform:scaleX(0.905);">Datum</div>
<div style="left:849px;top:317px;width:137px;height:20px;background:#f4f4f4;box-sizing:border-box;border:1px solid #d6d6d6;"></div>
<div style="left:852px;top:320px;width:14px;height:14px;background:#f8f8f8;box-sizing:border-box;border:1px solid #3d7bbf;"></div>
<svg style="left:853px;top:321px;" width="12" height="12" viewBox="0 0 12 12"><path d="M2 6l3 3.2 5.5-7.5" stroke="#111" stroke-width="1.8" fill="none"/></svg>
<div style="left:868.0px;top:318.3px;line-height:18px;font-size:12px;color:#141414;transform:scaleX(0.900);">03.07.2014 09:14</div>
<svg style="left:960px;top:321px;" width="21" height="12" viewBox="0 0 21 12"><rect x="0.5" y="0.5" width="10" height="11" fill="#e8e8e8" stroke="#888"/><path d="M2 3h7M2 5.5h7M2 8h7" stroke="#aaa" stroke-width=".8"/><path d="M13 4h7l-3.5 4z" fill="#456"/></svg>
<div style="left:994.3px;top:318.0px;line-height:18px;font-size:12px;color:#141414;transform:scaleX(0.750);">Prio.</div>
<div style="left:1017px;top:317px;width:173px;height:20px;background:#f4f4f4;box-sizing:border-box;border:1px solid #c8c8c8;"></div>
<div style="left:1174px;top:317px;width:16px;height:20px;background:#f0f0f0;box-sizing:border-box;border:1px solid #333;"></div>
<svg style="left:1178.5px;top:327px;" width="7" height="4" viewBox="0 0 7 4"><path d="M0 0h7l-3.5 4z" fill="#111"/></svg>
<div style="left:810.5px;top:338.4px;line-height:18px;font-size:12px;color:#141414;transform:scaleX(0.942);">... bis</div>
<div style="left:849px;top:338px;width:137px;height:20px;background:#f4f4f4;box-sizing:border-box;border:1px solid #d6d6d6;"></div>
<div style="left:852px;top:341px;width:14px;height:14px;background:#f8f8f8;box-sizing:border-box;border:1px solid #7aa6d6;"></div>
<div style="left:868.0px;top:339.0px;line-height:18px;font-size:12px;color:#9a9a9a;transform:scaleX(0.900);">27.09.2014 10:42</div>
<svg style="left:960px;top:342px;" width="21" height="12" viewBox="0 0 21 12"><rect x="0.5" y="0.5" width="10" height="11" fill="#e8e8e8" stroke="#888"/><path d="M2 3h7M2 5.5h7M2 8h7" stroke="#aaa" stroke-width=".8"/><path d="M13 4h7l-3.5 4z" fill="#456"/></svg>
<div style="left:1206.0px;top:328.0px;line-height:18px;font-size:12px;color:#1e5a1e;font-weight:bold;transform:scaleX(0.929);">Erledigt</div>
<div style="left:1256px;top:330px;width:13px;height:13px;background:#f8f8f8;box-sizing:border-box;border:1px solid #555;"></div>
<div style="left:1115.0px;top:347.0px;line-height:18px;font-size:12px;color:#141414;transform:scaleX(0.912);">Verantw.</div>
<div style="left:1202.0px;top:347.0px;line-height:18px;font-size:12px;color:#1a1a80;font-weight:bold;transform:scaleX(0.951);">Eingang</div>
<div style="left:1256px;top:349px;width:13px;height:13px;background:#f8f8f8;box-sizing:border-box;border:1px solid #555;"></div>
<div style="left:807px;top:359px;width:72px;height:71px;background:#ececec;box-sizing:border-box;border:1px solid #c8c8c8;"></div>
<div style="left:809px;top:361px;width:48px;height:48px;background:#4f5361;"></div>
<svg style="left:817px;top:369px;" width="32" height="32" viewBox="0 0 32 32"><circle cx="16" cy="16" r="15.8" fill="#f29c12"/><circle cx="16" cy="15" r="4.3" fill="none" stroke="#fff8e0" stroke-width="1.8"/><path d="M20.3 10.5v6a2.6 2.6 0 0 0 5.2 0v-1.5a9.6 9.6 0 1 0-4 7.8" fill="none" stroke="#fff8e0" stroke-width="1.8"/></svg>
<div style="left:857px;top:361px;width:1px;height:48px;background:#d0d0d0;"></div>
<svg style="left:862px;top:380px;" width="12" height="9" viewBox="0 0 12 9"><path d="M0 0h12l-6 7z" fill="#3a9ad8"/><path d="M0 8.5h12" stroke="#c0d8e8"/></svg>
<div style="left:808px;top:410px;width:70px;height:1px;background:#d0d0d0;"></div>
<div style="left:820.0px;top:413.5px;line-height:17px;font-size:11px;color:#141414;transform:scaleX(0.855);">Versenden</div>
<div style="left:891.0px;top:368.4px;line-height:18px;font-size:12px;color:#141414;transform:scaleX(0.883);">Ihr Zeichen</div>
<div style="left:967px;top:367px;width:138px;height:20px;background:#f4f4f4;box-sizing:border-box;border:1px solid #a8a8a8;"></div>
<div style="left:970.0px;top:368.5px;line-height:18px;font-size:12px;color:#141414;transform:scaleX(0.899);">51370</div>
<div style="left:891.0px;top:389.6px;line-height:18px;font-size:12px;color:#141414;transform:scaleX(0.902);">Ihr Schreiben v.</div>
<div style="left:967px;top:388px;width:138px;height:20px;background:#f4f4f4;box-sizing:border-box;border:1px solid #d6d6d6;"></div>
<div style="left:971px;top:391px;width:13px;height:13px;background:#f8f8f8;box-sizing:border-box;border:1px solid #3d7bbf;"></div>
<svg style="left:972px;top:392px;" width="11" height="11" viewBox="0 0 11 11"><path d="M2 5.5l2.5 3 5-7" stroke="#111" stroke-width="1.8" fill="none"/></svg>
<div style="left:986.0px;top:389.3px;line-height:18px;font-size:12px;color:#141414;transform:scaleX(0.900);">03.07.2014 08:54</div>
<svg style="left:1077px;top:392px;" width="21" height="12" viewBox="0 0 21 12"><rect x="0.5" y="0.5" width="10" height="11" fill="#e8e8e8" stroke="#888"/><path d="M2 3h7M2 5.5h7M2 8h7" stroke="#aaa" stroke-width=".8"/><path d="M13 4h7l-3.5 4z" fill="#456"/></svg>
<div style="left:891.0px;top:410.3px;line-height:18px;font-size:12px;color:#141414;transform:scaleX(0.866);">Wiedervorlage</div>
<div style="left:967px;top:409px;width:138px;height:21px;background:#f4f4f4;box-sizing:border-box;border:1px solid #d6d6d6;"></div>
<div style="left:971px;top:413px;width:13px;height:13px;background:#f8f8f8;box-sizing:border-box;border:1px solid #7aa6d6;"></div>
<div style="left:986.0px;top:411.0px;line-height:18px;font-size:12px;color:#9a9a9a;transform:scaleX(0.900);">27.09.2014 10:42</div>
<svg style="left:1077px;top:414px;" width="21" height="12" viewBox="0 0 21 12"><rect x="0.5" y="0.5" width="10" height="11" fill="#e8e8e8" stroke="#888"/><path d="M2 3h7M2 5.5h7M2 8h7" stroke="#aaa" stroke-width=".8"/><path d="M13 4h7l-3.5 4z" fill="#456"/></svg>
<div style="left:1111px;top:368px;width:158px;height:20px;background:#f3f3f3;"></div>
<div style="left:1251px;top:368px;width:18px;height:20px;background:#ececec;"></div>
<svg style="left:1256.5px;top:376.5px;" width="7" height="4" viewBox="0 0 7 4"><path d="M0 0h7l-3.5 4z" fill="#111"/></svg>
<div style="left:1114.5px;top:369.5px;line-height:18px;font-size:12px;color:#141414;transform:scaleX(0.880);">Hellwig, Lothar</div>
<div style="left:1111px;top:389px;width:158px;height:20px;background:#ececec;box-sizing:border-box;border:1px solid #c8c8c8;"></div>
<div style="left:1114.5px;top:390.0px;line-height:18px;font-size:12px;color:#111;font-weight:bold;transform:scaleX(1.004);">ADMIN</div>
<div style="left:1111px;top:410px;width:158px;height:20px;background:#ececec;box-sizing:border-box;border:1px solid #c8c8c8;"></div>
<div style="left:1168.5px;top:412.0px;line-height:17px;font-size:11px;color:#141414;transform:scaleX(0.847);">als Anlage</div>
<div style="left:798px;top:438px;width:480px;height:16px;background:#eceef1;"></div>
<div style="left:803.8px;top:437.7px;line-height:18px;font-size:12px;color:#141414;transform:scaleX(0.778);">Erl.</div>
<div style="left:825.5px;top:437.7px;line-height:18px;font-size:12px;color:#141414;transform:scaleX(0.875);">E</div>
<div style="left:847.4px;top:437.7px;line-height:18px;font-size:12px;color:#141414;transform:scaleX(0.900);">M</div>
<div style="left:867.7px;top:437.7px;line-height:18px;font-size:12px;color:#141414;transform:scaleX(0.847);">Do</div>
<div style="left:888.8px;top:437.7px;line-height:18px;font-size:12px;color:#141414;transform:scaleX(0.807);">Anl</div>
<div style="left:909.8px;top:437.7px;line-height:18px;font-size:12px;color:#141414;transform:scaleX(0.827);">Typ</div>
<div style="left:961.0px;top:437.7px;line-height:18px;font-size:12px;color:#141414;transform:scaleX(0.854);">Betreff</div>
<div style="left:1161.6px;top:437.7px;line-height:18px;font-size:12px;color:#141414;transform:scaleX(0.835);">Datum</div>
<div style="left:1226.5px;top:437.7px;line-height:18px;font-size:12px;color:#141414;transform:scaleX(0.846);">Dat.Bis</div>
<div style="left:798px;top:454px;width:480px;height:305px;background:#cfd6e0;"></div>
<div style="left:798px;top:454px;width:480px;height:18px;background:#7e96c1;"></div>
<div style="left:842px;top:454px;width:20px;height:18px;background:#f8d9a8;"></div>
<div style="left:804px;top:459px;width:10px;height:10px;background:#c4cddc;box-sizing:border-box;border:1px solid #222;border-right-color:#f0f0f0;border-bottom-color:#f0f0f0;border-width:1.5px 1px 1px 1.5px;"></div>
<svg style="left:824px;top:457px;" width="13" height="12" viewBox="0 0 13 12"><path d="M1 9l5-5-2-2h8v8l-2-2-5 5z" fill="#3a3a3a"/></svg>
<div style="left:847px;top:459px;width:10px;height:10px;background:#f3d9b8;box-sizing:border-box;border:1px solid #e07020;border-right-color:#f0f0f0;border-bottom-color:#f0f0f0;border-width:1.5px 1px 1px 1.5px;"></div>
<svg style="left:867px;top:455px;" width="12" height="16" viewBox="0 0 12 16"><path d="M1 0h7l4 4v11a1 1 0 0 1-1 1h-10a1 1 0 0 1-1-1v-14a1 1 0 0 1 1-1z" fill="#7a7a7a"/><path d="M7 1v4h4" stroke="#ddd" stroke-width="1" fill="none"/></svg>
<div style="left:909.5px;top:454.5px;line-height:18px;font-size:12px;color:#505a66;transform:scaleX(0.941);">E-Mail</div>
<div style="left:959.5px;top:454.5px;line-height:18px;font-size:12px;color:#505a66;transform:scaleX(0.880);">Re: test senden</div>
<div style="left:1159.0px;top:454.5px;line-height:18px;font-size:12px;color:#505a66;transform:scaleX(0.916);">03.07.2014</div>
<div style="left:804px;top:477px;width:10px;height:10px;background:#eef0f3;box-sizing:border-box;border:1px solid #222;border-right-color:#f0f0f0;border-bottom-color:#f0f0f0;border-width:1.5px 1px 1px 1.5px;"></div>
<svg style="left:805px;top:478px;" width="9" height="9" viewBox="0 0 9 9"><path d="M1.2 4.5l2.3 2.8 4.5-6" stroke="#111" stroke-width="1.8" fill="none"/></svg>
<svg style="left:824px;top:475px;" width="13" height="12" viewBox="0 0 13 12"><path d="M1 3l5 5-2 2h8v-8l-2 2-5-5z" fill="#3a3a3a"/></svg>
<div style="left:847px;top:477px;width:10px;height:10px;background:#eef0f3;box-sizing:border-box;border:1px solid #222;border-right-color:#f0f0f0;border-bottom-color:#f0f0f0;border-width:1.5px 1px 1px 1.5px;"></div>
<svg style="left:867px;top:473px;" width="12" height="16" viewBox="0 0 12 16"><path d="M1 0h7l4 4v11a1 1 0 0 1-1 1h-10a1 1 0 0 1-1-1v-14a1 1 0 0 1 1-1z" fill="#7a7a7a"/><path d="M7 1v4h4" stroke="#ddd" stroke-width="1" fill="none"/></svg>
<div style="left:909.5px;top:472.5px;line-height:18px;font-size:12px;color:#141414;transform:scaleX(0.941);">E-Mail</div>
<div style="left:959.5px;top:472.5px;line-height:18px;font-size:12px;color:#141414;transform:scaleX(0.880);">test senden</div>
<div style="left:1159.0px;top:472.5px;line-height:18px;font-size:12px;color:#141414;transform:scaleX(0.916);">03.07.2014</div>
<div style="left:804px;top:495px;width:10px;height:10px;background:#eef0f3;box-sizing:border-box;border:1px solid #222;border-right-color:#f0f0f0;border-bottom-color:#f0f0f0;border-width:1.5px 1px 1px 1.5px;"></div>
<svg style="left:805px;top:496px;" width="9" height="9" viewBox="0 0 9 9"><path d="M1.2 4.5l2.3 2.8 4.5-6" stroke="#109010" stroke-width="1.8" fill="none"/></svg>
<svg style="left:824px;top:493px;" width="13" height="12" viewBox="0 0 13 12"><path d="M1 9l5-5-2-2h8v8l-2-2-5 5z" fill="#3a3a3a"/></svg>
<div style="left:847px;top:495px;width:10px;height:10px;background:#eef0f3;box-sizing:border-box;border:1px solid #e07020;border-right-color:#f0f0f0;border-bottom-color:#f0f0f0;border-width:1.5px 1px 1px 1.5px;"></div>
<svg style="left:867px;top:491px;" width="12" height="16" viewBox="0 0 12 16"><path d="M1 0h7l4 4v11a1 1 0 0 1-1 1h-10a1 1 0 0 1-1-1v-14a1 1 0 0 1 1-1z" fill="#7a7a7a"/><path d="M7 1v4h4" stroke="#ddd" stroke-width="1" fill="none"/></svg>
<div style="left:909.5px;top:490.5px;line-height:18px;font-size:12px;color:#141414;transform:scaleX(0.941);">E-Mail</div>
<div style="left:959.5px;top:490.5px;line-height:18px;font-size:12px;color:#141414;transform:scaleX(0.880);">AW: Bestellung Nr:105 / Sonntag, 17. ...</div>
<div style="left:1159.0px;top:490.5px;line-height:18px;font-size:12px;color:#141414;transform:scaleX(0.916);">19.08.2013</div>
<div style="left:1224.3px;top:490.5px;line-height:18px;font-size:12px;color:#141414;transform:scaleX(0.900);">30.12.1899</div>
<div style="left:804px;top:513px;width:10px;height:10px;background:#eef0f3;box-sizing:border-box;border:1px solid #222;border-right-color:#f0f0f0;border-bottom-color:#f0f0f0;border-width:1.5px 1px 1px 1.5px;"></div>
<svg style="left:805px;top:514px;" width="9" height="9" viewBox="0 0 9 9"><path d="M1.2 4.5l2.3 2.8 4.5-6" stroke="#111" stroke-width="1.8" fill="none"/></svg>
<svg style="left:824px;top:511px;" width="13" height="12" viewBox="0 0 13 12"><path d="M1 9l5-5-2-2h8v8l-2-2-5 5z" fill="#3a3a3a"/></svg>
<div style="left:847px;top:513px;width:10px;height:10px;background:#eef0f3;box-sizing:border-box;border:1px solid #222;border-right-color:#f0f0f0;border-bottom-color:#f0f0f0;border-width:1.5px 1px 1px 1.5px;"></div>
<div style="left:909.5px;top:508.5px;line-height:18px;font-size:12px;color:#141414;transform:scaleX(0.941);">E-Mail</div>
<div style="left:959.5px;top:508.5px;line-height:18px;font-size:12px;color:#141414;transform:scaleX(0.880);">Chili2</div>
<div style="left:1159.0px;top:508.5px;line-height:18px;font-size:12px;color:#141414;transform:scaleX(0.916);">19.08.2013</div>
<div style="left:1224.3px;top:508.5px;line-height:18px;font-size:12px;color:#141414;transform:scaleX(0.900);">30.12.1899</div>
<div style="left:804px;top:531px;width:10px;height:10px;background:#eef0f3;box-sizing:border-box;border:1px solid #222;border-right-color:#f0f0f0;border-bottom-color:#f0f0f0;border-width:1.5px 1px 1px 1.5px;"></div>
<svg style="left:805px;top:532px;" width="9" height="9" viewBox="0 0 9 9"><path d="M1.2 4.5l2.3 2.8 4.5-6" stroke="#109010" stroke-width="1.8" fill="none"/></svg>
<svg style="left:824px;top:529px;" width="13" height="12" viewBox="0 0 13 12"><path d="M1 3l5 5-2 2h8v-8l-2 2-5-5z" fill="#3a3a3a"/></svg>
<div style="left:847px;top:531px;width:10px;height:10px;background:#eef0f3;box-sizing:border-box;border:1px solid #e07020;border-right-color:#f0f0f0;border-bottom-color:#f0f0f0;border-width:1.5px 1px 1px 1.5px;"></div>
<svg style="left:867px;top:527px;" width="12" height="16" viewBox="0 0 12 16"><path d="M1 0h7l4 4v11a1 1 0 0 1-1 1h-10a1 1 0 0 1-1-1v-14a1 1 0 0 1 1-1z" fill="#7a7a7a"/><path d="M7 1v4h4" stroke="#ddd" stroke-width="1" fill="none"/></svg>
<div style="left:909.5px;top:526.5px;line-height:18px;font-size:12px;color:#141414;transform:scaleX(0.941);">E-Mail</div>
<div style="left:959.5px;top:526.5px;line-height:18px;font-size:12px;color:#141414;transform:scaleX(0.880);">AW: Bestellung Nr:105 / Sonntag, 17. ...</div>
<div style="left:1159.0px;top:526.5px;line-height:18px;font-size:12px;color:#141414;transform:scaleX(0.916);">18.10.2010</div>
<div style="left:1224.3px;top:526.5px;line-height:18px;font-size:12px;color:#141414;transform:scaleX(0.900);">30.12.1899</div>
<div style="left:804px;top:549px;width:10px;height:10px;background:#eef0f3;box-sizing:border-box;border:1px solid #222;border-right-color:#f0f0f0;border-bottom-color:#f0f0f0;border-width:1.5px 1px 1px 1.5px;"></div>
<svg style="left:805px;top:550px;" width="9" height="9" viewBox="0 0 9 9"><path d="M1.2 4.5l2.3 2.8 4.5-6" stroke="#111" stroke-width="1.8" fill="none"/></svg>
<svg style="left:824px;top:547px;" width="13" height="12" viewBox="0 0 13 12"><path d="M1 3l5 5-2 2h8v-8l-2 2-5-5z" fill="#3a3a3a"/></svg>
<div style="left:847px;top:549px;width:10px;height:10px;background:#eef0f3;box-sizing:border-box;border:1px solid #222;border-right-color:#f0f0f0;border-bottom-color:#f0f0f0;border-width:1.5px 1px 1px 1.5px;"></div>
<svg style="left:867px;top:545px;" width="12" height="16" viewBox="0 0 12 16"><path d="M1 0h7l4 4v11a1 1 0 0 1-1 1h-10a1 1 0 0 1-1-1v-14a1 1 0 0 1 1-1z" fill="#7a7a7a"/><path d="M7 1v4h4" stroke="#ddd" stroke-width="1" fill="none"/></svg>
<div style="left:909.5px;top:544.5px;line-height:18px;font-size:12px;color:#141414;transform:scaleX(0.941);">E-Mail</div>
<div style="left:959.5px;top:544.5px;line-height:18px;font-size:12px;color:#141414;transform:scaleX(0.880);">Chili2</div>
<div style="left:1159.0px;top:544.5px;line-height:18px;font-size:12px;color:#141414;transform:scaleX(0.916);">13.09.2010</div>
<div style="left:1224.3px;top:544.5px;line-height:18px;font-size:12px;color:#141414;transform:scaleX(0.900);">30.12.1899</div>
<div style="left:804px;top:567px;width:10px;height:10px;background:#eef0f3;box-sizing:border-box;border:1px solid #222;border-right-color:#f0f0f0;border-bottom-color:#f0f0f0;border-width:1.5px 1px 1px 1.5px;"></div>
<svg style="left:805px;top:568px;" width="9" height="9" viewBox="0 0 9 9"><path d="M1.2 4.5l2.3 2.8 4.5-6" stroke="#109010" stroke-width="1.8" fill="none"/></svg>
<svg style="left:824px;top:565px;" width="13" height="12" viewBox="0 0 13 12"><path d="M1 9l5-5-2-2h8v8l-2-2-5 5z" fill="#3a3a3a"/></svg>
<div style="left:847px;top:567px;width:10px;height:10px;background:#eef0f3;box-sizing:border-box;border:1px solid #e07020;border-right-color:#f0f0f0;border-bottom-color:#f0f0f0;border-width:1.5px 1px 1px 1.5px;"></div>
<svg style="left:867px;top:563px;" width="12" height="16" viewBox="0 0 12 16"><path d="M1 0h7l4 4v11a1 1 0 0 1-1 1h-10a1 1 0 0 1-1-1v-14a1 1 0 0 1 1-1z" fill="#7a7a7a"/><path d="M7 1v4h4" stroke="#ddd" stroke-width="1" fill="none"/></svg>
<div style="left:909.5px;top:562.5px;line-height:18px;font-size:12px;color:#141414;transform:scaleX(0.941);">E-Mail</div>
<div style="left:959.5px;top:562.5px;line-height:18px;font-size:12px;color:#141414;transform:scaleX(0.880);">AW: Bestätigung Bestellung Chili 2 M</div>
<div style="left:1159.0px;top:562.5px;line-height:18px;font-size:12px;color:#141414;transform:scaleX(0.916);">25.08.2010</div>
<div style="left:1224.3px;top:562.5px;line-height:18px;font-size:12px;color:#141414;transform:scaleX(0.900);">30.12.1899</div>
<div style="left:804px;top:585px;width:10px;height:10px;background:#eef0f3;box-sizing:border-box;border:1px solid #222;border-right-color:#f0f0f0;border-bottom-color:#f0f0f0;border-width:1.5px 1px 1px 1.5px;"></div>
<svg style="left:805px;top:586px;" width="9" height="9" viewBox="0 0 9 9"><path d="M1.2 4.5l2.3 2.8 4.5-6" stroke="#111" stroke-width="1.8" fill="none"/></svg>
<svg style="left:824px;top:583px;" width="13" height="12" viewBox="0 0 13 12"><path d="M1 3l5 5-2 2h8v-8l-2 2-5-5z" fill="#3a3a3a"/></svg>
<div style="left:847px;top:585px;width:10px;height:10px;background:#eef0f3;box-sizing:border-box;border:1px solid #222;border-right-color:#f0f0f0;border-bottom-color:#f0f0f0;border-width:1.5px 1px 1px 1.5px;"></div>
<svg style="left:867px;top:581px;" width="12" height="16" viewBox="0 0 12 16"><path d="M1 0h7l4 4v11a1 1 0 0 1-1 1h-10a1 1 0 0 1-1-1v-14a1 1 0 0 1 1-1z" fill="#7a7a7a"/><path d="M7 1v4h4" stroke="#ddd" stroke-width="1" fill="none"/></svg>
<div style="left:909.5px;top:580.5px;line-height:18px;font-size:12px;color:#141414;transform:scaleX(0.941);">E-Mail</div>
<div style="left:959.5px;top:580.5px;line-height:18px;font-size:12px;color:#141414;transform:scaleX(0.880);">Bestätigung Bestellung Chili 2 M</div>
<div style="left:1159.0px;top:580.5px;line-height:18px;font-size:12px;color:#141414;transform:scaleX(0.916);">17.08.2010</div>
<div style="left:1224.3px;top:580.5px;line-height:18px;font-size:12px;color:#141414;transform:scaleX(0.900);">30.12.1899</div>
<div style="left:804px;top:603px;width:10px;height:10px;background:#eef0f3;box-sizing:border-box;border:1px solid #222;border-right-color:#f0f0f0;border-bottom-color:#f0f0f0;border-width:1.5px 1px 1px 1.5px;"></div>
<svg style="left:805px;top:604px;" width="9" height="9" viewBox="0 0 9 9"><path d="M1.2 4.5l2.3 2.8 4.5-6" stroke="#109010" stroke-width="1.8" fill="none"/></svg>
<svg style="left:824px;top:601px;" width="13" height="12" viewBox="0 0 13 12"><path d="M1 3l5 5-2 2h8v-8l-2 2-5-5z" fill="#3a3a3a"/></svg>
<div style="left:847px;top:603px;width:10px;height:10px;background:#eef0f3;box-sizing:border-box;border:1px solid #e07020;border-right-color:#f0f0f0;border-bottom-color:#f0f0f0;border-width:1.5px 1px 1px 1.5px;"></div>
<svg style="left:867px;top:599px;" width="12" height="16" viewBox="0 0 12 16"><path d="M1 0h7l4 4v11a1 1 0 0 1-1 1h-10a1 1 0 0 1-1-1v-14a1 1 0 0 1 1-1z" fill="#7a7a7a"/><path d="M7 1v4h4" stroke="#ddd" stroke-width="1" fill="none"/></svg>
<div style="left:909.5px;top:598.5px;line-height:18px;font-size:12px;color:#141414;transform:scaleX(0.941);">E-Mail</div>
<div style="left:959.5px;top:598.5px;line-height:18px;font-size:12px;color:#141414;transform:scaleX(0.880);">Re: AW: Propeller A4</div>
<div style="left:1159.0px;top:598.5px;line-height:18px;font-size:12px;color:#141414;transform:scaleX(0.916);">28.06.2010</div>
<div style="left:1224.3px;top:598.5px;line-height:18px;font-size:12px;color:#141414;transform:scaleX(0.900);">30.12.1899</div>
<div style="left:798px;top:759px;width:480px;height:18px;background:#ececec;"></div>
<div style="left:815px;top:760px;width:144px;height:15px;background:#c8c8c8;"></div>
<svg style="left:803px;top:763px;" width="6" height="9" viewBox="0 0 6 9"><path d="M5 .5l-4 4 4 4" stroke="#333" stroke-width="1.6" fill="none"/></svg>
<svg style="left:1267px;top:763px;" width="6" height="9" viewBox="0 0 6 9"><path d="M1 .5l4 4-4 4" stroke="#333" stroke-width="1.6" fill="none"/></svg>
<div style="left:0px;top:777px;width:1282px;height:1px;background:#f6f6f6;"></div>
<div style="left:1px;top:778px;width:1281px;height:22px;background:linear-gradient(90deg,#1b2f5b 0%,#1f3461 30%,#2b426f 60%,#3c5079 85%,#4a5b7d 100%);"></div>
<div style="left:0px;top:800px;width:1282px;height:1px;background:#c8ccd4;"></div>
<div style="left:0px;top:778px;width:1px;height:23px;background:#d0d6e2;"></div>
<svg style="left:3px;top:780px;" width="15" height="15" viewBox="0 0 15 15"><path d="M0.5 0.5v14" stroke="#8898b8" stroke-width=".8"/><path d="M1.5 2l5 5.5-5 5.5M6.5 2l5 5.5-5 5.5" stroke="#a8aeb8" stroke-width="1.3" fill="none"/></svg>
<div style="left:38.0px;top:779.5px;line-height:18px;font-size:12px;color:#f4f6fa;transform:scaleX(0.971);">Korrespondenz</div>
<div style="left:141.5px;top:779.5px;line-height:18px;font-size:12px;color:#f4f6fa;transform:scaleX(0.982);">Benutzer:  Lothar  |  LOTHAR-LAP.bNICE_Lothar  |  LinkVorgaenge: dgvVorgaenge</div>
<div style="left:1224.4px;top:779.5px;line-height:18px;font-size:12px;color:#f4f6fa;transform:scaleX(0.917);">KW 39</div>
<svg style="left:1268px;top:785px;" width="11" height="12" viewBox="0 0 11 12"><g fill="#c8d0dc"><rect x="8" y="0" width="3" height="2"/><rect x="5" y="3" width="6" height="2"/><rect x="2" y="6" width="9" height="2"/><rect x="0" y="9" width="11" height="2"/></g></svg>
</body></html>
